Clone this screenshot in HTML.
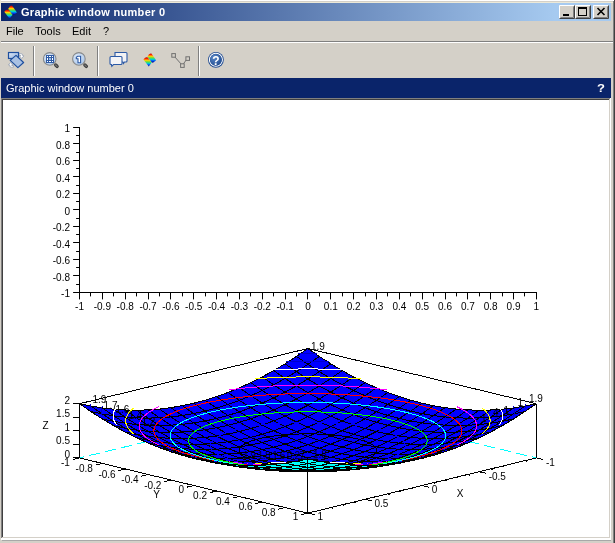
<!DOCTYPE html>
<html><head><meta charset="utf-8"><style>
html,body{margin:0;padding:0;}
svg,div{will-change:transform;}
body{width:615px;height:543px;position:relative;overflow:hidden;background:#d4d0c8;font-family:"Liberation Sans",sans-serif;}
.a{position:absolute;}
</style></head><body>
<div class="a" style="left:0;top:0;width:615px;height:1px;background:#fff"></div>
<div class="a" style="left:0;top:2px;width:613px;height:1px;background:#ece9d8"></div>
<div class="a" style="left:0;top:0;width:1px;height:21px;background:#ece9d8"></div>
<div class="a" style="left:613px;top:1px;width:1px;height:542px;background:#808080"></div>
<div class="a" style="left:614px;top:0;width:1px;height:543px;background:#404040"></div>
<div class="a" style="left:1px;top:3px;width:610px;height:18px;background:linear-gradient(to right,#0a246a 0px,#a6caf0 554px)"></div>
<div class="a" style="left:21px;top:5px;font-size:11px;line-height:14px;font-weight:bold;color:#fff;letter-spacing:0.3px;white-space:nowrap">Graphic window number 0</div>
<div class="a" style="left:6px;top:26px;font-size:11px;line-height:10px;white-space:nowrap">File</div>
<div class="a" style="left:35px;top:26px;font-size:11px;line-height:10px;white-space:nowrap">Tools</div>
<div class="a" style="left:72px;top:26px;font-size:11px;line-height:10px;white-space:nowrap">Edit</div>
<div class="a" style="left:103px;top:26px;font-size:11px;line-height:10px;white-space:nowrap">?</div>
<div class="a" style="left:1px;top:41px;width:612px;height:1px;background:#808080"></div>
<div class="a" style="left:1px;top:42px;width:612px;height:1px;background:#fff"></div>
<div class="a" style="left:1px;top:78px;width:610px;height:20px;background:#0a246a"></div>
<div class="a" style="left:6px;top:82px;font-size:11px;line-height:12px;color:#fff;white-space:nowrap">Graphic window number 0</div>
<div class="a" style="left:597px;top:83px;font-size:10px;line-height:11px;font-weight:bold;color:#fff;transform:scaleX(1.3);transform-origin:0 0">?</div>
<div class="a" style="left:1px;top:98px;width:610px;height:441px;background:#fff"></div>
<div class="a" style="left:1px;top:98px;width:609px;height:440px;background:#808080"></div>
<div class="a" style="left:2px;top:99px;width:608px;height:439px;background:#d4d0c8"></div>
<div class="a" style="left:2px;top:99px;width:607px;height:438px;background:#404040"></div>
<div class="a" style="left:3px;top:100px;width:606px;height:437px;background:#fff"></div>
<div class="a" style="left:1px;top:539px;width:610px;height:1px;background:#fff"></div>
<div class="a" style="left:2px;top:540px;width:609px;height:1px;background:#a8a8a8"></div>
<svg width="615" height="543" viewBox="0 0 615 543" style="position:absolute;left:0;top:0" font-family="Liberation Sans, sans-serif"><path d="M79.5 127.5V292.5H536.5" fill="none" stroke="#000" stroke-width="1" stroke-linecap="round"/><path d="M73.5 127.5H79.5 M76.5 135.5H79.5 M73.5 143.5H79.5 M76.5 152.5H79.5 M73.5 160.5H79.5 M76.5 168.5H79.5 M73.5 176.5H79.5 M76.5 185.5H79.5 M73.5 193.5H79.5 M76.5 201.5H79.5 M73.5 209.5H79.5 M76.5 218.5H79.5 M73.5 226.5H79.5 M76.5 234.5H79.5 M73.5 242.5H79.5 M76.5 251.5H79.5 M73.5 259.5H79.5 M76.5 267.5H79.5 M73.5 275.5H79.5 M76.5 284.5H79.5 M73.5 292.5H79.5 M79.5 292.5V299 M90.5 292.5V296 M102.5 292.5V299 M113.5 292.5V296 M125.5 292.5V299 M136.5 292.5V296 M148.5 292.5V299 M159.5 292.5V296 M170.5 292.5V299 M182.5 292.5V296 M193.5 292.5V299 M205.5 292.5V296 M216.5 292.5V299 M227.5 292.5V296 M239.5 292.5V299 M250.5 292.5V296 M262.5 292.5V299 M273.5 292.5V296 M285.5 292.5V299 M296.5 292.5V296 M307.5 292.5V299 M319.5 292.5V296 M330.5 292.5V299 M342.5 292.5V296 M353.5 292.5V299 M365.5 292.5V296 M376.5 292.5V299 M387.5 292.5V296 M399.5 292.5V299 M410.5 292.5V296 M422.5 292.5V299 M433.5 292.5V296 M445.5 292.5V299 M456.5 292.5V296 M467.5 292.5V299 M479.5 292.5V296 M490.5 292.5V299 M502.5 292.5V296 M513.5 292.5V299 M524.5 292.5V296 M536.5 292.5V299" stroke="#000" stroke-width="1" stroke-linecap="round"/><g font-size="10" fill="#000"><text x="70" y="132.3" text-anchor="end">1</text><text x="70" y="148.8" text-anchor="end">0.8</text><text x="70" y="165.3" text-anchor="end">0.6</text><text x="70" y="181.8" text-anchor="end">0.4</text><text x="70" y="198.3" text-anchor="end">0.2</text><text x="70" y="214.8" text-anchor="end">0</text><text x="70" y="231.3" text-anchor="end">-0.2</text><text x="70" y="247.8" text-anchor="end">-0.4</text><text x="70" y="264.3" text-anchor="end">-0.6</text><text x="70" y="280.8" text-anchor="end">-0.8</text><text x="70" y="297.3" text-anchor="end">-1</text><text x="79.5" y="310" text-anchor="middle">-1</text><text x="102.34" y="310" text-anchor="middle">-0.9</text><text x="125.19" y="310" text-anchor="middle">-0.8</text><text x="148.03" y="310" text-anchor="middle">-0.7</text><text x="170.88" y="310" text-anchor="middle">-0.6</text><text x="193.72" y="310" text-anchor="middle">-0.5</text><text x="216.57" y="310" text-anchor="middle">-0.4</text><text x="239.41" y="310" text-anchor="middle">-0.3</text><text x="262.26" y="310" text-anchor="middle">-0.2</text><text x="285.11" y="310" text-anchor="middle">-0.1</text><text x="307.95" y="310" text-anchor="middle">0</text><text x="330.79" y="310" text-anchor="middle">0.1</text><text x="353.64" y="310" text-anchor="middle">0.2</text><text x="376.49" y="310" text-anchor="middle">0.3</text><text x="399.33" y="310" text-anchor="middle">0.4</text><text x="422.17" y="310" text-anchor="middle">0.5</text><text x="445.02" y="310" text-anchor="middle">0.6</text><text x="467.87" y="310" text-anchor="middle">0.7</text><text x="490.71" y="310" text-anchor="middle">0.8</text><text x="513.55" y="310" text-anchor="middle">0.9</text><text x="536.4" y="310" text-anchor="middle">1</text></g><path d="M79.5 403.7L307.9 348.5M307.9 348.5L536.3 403.7" fill="none" stroke="#000" stroke-width="1" shape-rendering="crispEdges"/><path d="M79.5 457.9L307.9 402.7M536.3 457.9L307.9 402.7" fill="none" stroke="#00ffff" stroke-width="1" stroke-dasharray="11.1 5.3" stroke-dashoffset="6.7" shape-rendering="crispEdges"/><g font-size="10" fill="#000"><text x="92.5" y="403">1.9</text><text x="103.6" y="408.5">1.7</text><text x="529" y="402.3">1.9</text><text x="517.5" y="406.3">1</text><text x="311" y="349.5">1.9</text></g><g fill="#0000ff" stroke="#000" stroke-width="1" shape-rendering="crispEdges"><path d="M307.9 348.5L296.48 356.41L307.9 364.32L319.32 356.41Z"/><path d="M319.32 356.41L307.9 364.32L319.32 371.68L330.74 363.78Z"/><path d="M296.48 356.41L285.06 363.78L296.48 371.68L307.9 364.32Z"/><path d="M307.9 364.32L296.48 371.68L307.9 379.05L319.32 371.68Z"/><path d="M330.74 363.78L319.32 371.68L330.74 378.51L342.16 370.6Z"/><path d="M285.06 363.78L273.64 370.6L285.06 378.51L296.48 371.68Z"/><path d="M319.32 371.68L307.9 379.05L319.32 385.88L330.74 378.51Z"/><path d="M296.48 371.68L285.06 378.51L296.48 385.88L307.9 379.05Z"/><path d="M342.16 370.6L330.74 378.51L342.16 384.79L353.58 376.88Z"/><path d="M273.64 370.6L262.22 376.88L273.64 384.79L285.06 378.51Z"/><path d="M307.9 379.05L296.48 385.88L307.9 392.7L319.32 385.88Z"/><path d="M330.74 378.51L319.32 385.88L330.74 392.16L342.16 384.79Z"/><path d="M285.06 378.51L273.64 384.79L285.06 392.16L296.48 385.88Z"/><path d="M353.58 376.88L342.16 384.79L353.58 390.53L365 382.62Z"/><path d="M262.22 376.88L250.8 382.62L262.22 390.53L273.64 384.79Z"/><path d="M319.32 385.88L307.9 392.7L319.32 398.99L330.74 392.16Z"/><path d="M296.48 385.88L285.06 392.16L296.48 398.99L307.9 392.7Z"/><path d="M342.16 384.79L330.74 392.16L342.16 397.9L353.58 390.53Z"/><path d="M273.64 384.79L262.22 390.53L273.64 397.9L285.06 392.16Z"/><path d="M365 382.62L353.58 390.53L365 395.73L376.42 387.82Z"/><path d="M250.8 382.62L239.38 387.82L250.8 395.73L262.22 390.53Z"/><path d="M307.9 392.7L296.48 398.99L307.9 405.27L319.32 398.99Z"/><path d="M330.74 392.16L319.32 398.99L330.74 404.73L342.16 397.9Z"/><path d="M285.06 392.16L273.64 397.9L285.06 404.73L296.48 398.99Z"/><path d="M353.58 390.53L342.16 397.9L353.58 403.1L365 395.73Z"/><path d="M262.22 390.53L250.8 395.73L262.22 403.1L273.64 397.9Z"/><path d="M376.42 387.82L365 395.73L376.42 400.39L387.84 392.48Z"/><path d="M239.38 387.82L227.96 392.48L239.38 400.39L250.8 395.73Z"/><path d="M319.32 398.99L307.9 405.27L319.32 411.01L330.74 404.73Z"/><path d="M296.48 398.99L285.06 404.73L296.48 411.01L307.9 405.27Z"/><path d="M342.16 397.9L330.74 404.73L342.16 409.92L353.58 403.1Z"/><path d="M273.64 397.9L262.22 403.1L273.64 409.92L285.06 404.73Z"/><path d="M365 395.73L353.58 403.1L365 407.76L376.42 400.39Z"/><path d="M250.8 395.73L239.38 400.39L250.8 407.76L262.22 403.1Z"/><path d="M387.84 392.48L376.42 400.39L387.84 404.5L399.26 396.6Z"/><path d="M227.96 392.48L216.54 396.6L227.96 404.5L239.38 400.39Z"/><path d="M307.9 405.27L296.48 411.01L307.9 416.75L319.32 411.01Z"/><path d="M330.74 404.73L319.32 411.01L330.74 416.21L342.16 409.92Z"/><path d="M285.06 404.73L273.64 409.92L285.06 416.21L296.48 411.01Z"/><path d="M353.58 403.1L342.16 409.92L353.58 414.58L365 407.76Z"/><path d="M262.22 403.1L250.8 407.76L262.22 414.58L273.64 409.92Z"/><path d="M376.42 400.39L365 407.76L376.42 411.87L387.84 404.5Z"/><path d="M239.38 400.39L227.96 404.5L239.38 411.87L250.8 407.76Z"/><path d="M399.26 396.6L387.84 404.5L399.26 408.08L410.68 400.17Z"/><path d="M216.54 396.6L205.12 400.17L216.54 408.08L227.96 404.5Z"/><path d="M319.32 411.01L307.9 416.75L319.32 421.95L330.74 416.21Z"/><path d="M296.48 411.01L285.06 416.21L296.48 421.95L307.9 416.75Z"/><path d="M342.16 409.92L330.74 416.21L342.16 420.87L353.58 414.58Z"/><path d="M273.64 409.92L262.22 414.58L273.64 420.87L285.06 416.21Z"/><path d="M365 407.76L353.58 414.58L365 418.7L376.42 411.87Z"/><path d="M250.8 407.76L239.38 411.87L250.8 418.7L262.22 414.58Z"/><path d="M387.84 404.5L376.42 411.87L387.84 415.44L399.26 408.08Z"/><path d="M227.96 404.5L216.54 408.08L227.96 415.44L239.38 411.87Z"/><path d="M410.68 400.17L399.26 408.08L410.68 411.11L422.1 403.2Z"/><path d="M205.12 400.17L193.7 403.2L205.12 411.11L216.54 408.08Z"/><path d="M307.9 416.75L296.48 421.95L307.9 427.15L319.32 421.95Z"/><path d="M330.74 416.21L319.32 421.95L330.74 426.61L342.16 420.87Z"/><path d="M285.06 416.21L273.64 420.87L285.06 426.61L296.48 421.95Z"/><path d="M353.58 414.58L342.16 420.87L353.58 424.98L365 418.7Z"/><path d="M262.22 414.58L250.8 418.7L262.22 424.98L273.64 420.87Z"/><path d="M376.42 411.87L365 418.7L376.42 422.27L387.84 415.44Z"/><path d="M239.38 411.87L227.96 415.44L239.38 422.27L250.8 418.7Z"/><path d="M399.26 408.08L387.84 415.44L399.26 418.48L410.68 411.11Z"/><path d="M216.54 408.08L205.12 411.11L216.54 418.48L227.96 415.44Z"/><path d="M422.1 403.2L410.68 411.11L422.1 413.6L433.52 405.69Z"/><path d="M193.7 403.2L182.28 405.69L193.7 413.6L205.12 411.11Z"/><path d="M319.32 421.95L307.9 427.15L319.32 431.81L330.74 426.61Z"/><path d="M296.48 421.95L285.06 426.61L296.48 431.81L307.9 427.15Z"/><path d="M342.16 420.87L330.74 426.61L342.16 430.72L353.58 424.98Z"/><path d="M273.64 420.87L262.22 424.98L273.64 430.72L285.06 426.61Z"/><path d="M365 418.7L353.58 424.98L365 428.55L376.42 422.27Z"/><path d="M250.8 418.7L239.38 422.27L250.8 428.55L262.22 424.98Z"/><path d="M387.84 415.44L376.42 422.27L387.84 425.3L399.26 418.48Z"/><path d="M227.96 415.44L216.54 418.48L227.96 425.3L239.38 422.27Z"/><path d="M410.68 411.11L399.26 418.48L410.68 420.96L422.1 413.6Z"/><path d="M205.12 411.11L193.7 413.6L205.12 420.96L216.54 418.48Z"/><path d="M433.52 405.69L422.1 413.6L433.52 415.54L444.94 407.64Z"/><path d="M182.28 405.69L170.86 407.64L182.28 415.54L193.7 413.6Z"/><path d="M307.9 427.15L296.48 431.81L307.9 436.46L319.32 431.81Z"/><path d="M330.74 426.61L319.32 431.81L330.74 435.92L342.16 430.72Z"/><path d="M285.06 426.61L273.64 430.72L285.06 435.92L296.48 431.81Z"/><path d="M353.58 424.98L342.16 430.72L353.58 434.29L365 428.55Z"/><path d="M262.22 424.98L250.8 428.55L262.22 434.29L273.64 430.72Z"/><path d="M376.42 422.27L365 428.55L376.42 431.58L387.84 425.3Z"/><path d="M239.38 422.27L227.96 425.3L239.38 431.58L250.8 428.55Z"/><path d="M399.26 418.48L387.84 425.3L399.26 427.79L410.68 420.96Z"/><path d="M216.54 418.48L205.12 420.96L216.54 427.79L227.96 425.3Z"/><path d="M422.1 413.6L410.68 420.96L422.1 422.91L433.52 415.54Z"/><path d="M193.7 413.6L182.28 415.54L193.7 422.91L205.12 420.96Z"/><path d="M444.94 407.64L433.52 415.54L444.94 416.95L456.36 409.04Z"/><path d="M170.86 407.64L159.44 409.04L170.86 416.95L182.28 415.54Z"/><path d="M319.32 431.81L307.9 436.46L319.32 440.58L330.74 435.92Z"/><path d="M296.48 431.81L285.06 435.92L296.48 440.58L307.9 436.46Z"/><path d="M342.16 430.72L330.74 435.92L342.16 439.49L353.58 434.29Z"/><path d="M273.64 430.72L262.22 434.29L273.64 439.49L285.06 435.92Z"/><path d="M365 428.55L353.58 434.29L365 437.32L376.42 431.58Z"/><path d="M250.8 428.55L239.38 431.58L250.8 437.32L262.22 434.29Z"/><path d="M387.84 425.3L376.42 431.58L387.84 434.07L399.26 427.79Z"/><path d="M227.96 425.3L216.54 427.79L227.96 434.07L239.38 431.58Z"/><path d="M410.68 420.96L399.26 427.79L410.68 429.74L422.1 422.91Z"/><path d="M205.12 420.96L193.7 422.91L205.12 429.74L216.54 427.79Z"/><path d="M433.52 415.54L422.1 422.91L433.52 424.32L444.94 416.95Z"/><path d="M182.28 415.54L170.86 416.95L182.28 424.32L193.7 422.91Z"/><path d="M456.36 409.04L444.94 416.95L456.36 417.81L467.78 409.9Z"/><path d="M159.44 409.04L148.02 409.9L159.44 417.81L170.86 416.95Z"/><path d="M307.9 436.46L296.48 440.58L307.9 444.69L319.32 440.58Z"/><path d="M330.74 435.92L319.32 440.58L330.74 444.15L342.16 439.49Z"/><path d="M285.06 435.92L273.64 439.49L285.06 444.15L296.48 440.58Z"/><path d="M353.58 434.29L342.16 439.49L353.58 442.52L365 437.32Z"/><path d="M262.22 434.29L250.8 437.32L262.22 442.52L273.64 439.49Z"/><path d="M376.42 431.58L365 437.32L376.42 439.81L387.84 434.07Z"/><path d="M239.38 431.58L227.96 434.07L239.38 439.81L250.8 437.32Z"/><path d="M399.26 427.79L387.84 434.07L399.26 436.02L410.68 429.74Z"/><path d="M216.54 427.79L205.12 429.74L216.54 436.02L227.96 434.07Z"/><path d="M422.1 422.91L410.68 429.74L422.1 431.14L433.52 424.32Z"/><path d="M193.7 422.91L182.28 424.32L193.7 431.14L205.12 429.74Z"/><path d="M444.94 416.95L433.52 424.32L444.94 425.18L456.36 417.81Z"/><path d="M170.86 416.95L159.44 417.81L170.86 425.18L182.28 424.32Z"/><path d="M467.78 409.9L456.36 417.81L467.78 418.13L479.2 410.22Z"/><path d="M148.02 409.9L136.6 410.22L148.02 418.13L159.44 417.81Z"/><path d="M319.32 440.58L307.9 444.69L319.32 448.26L330.74 444.15Z"/><path d="M296.48 440.58L285.06 444.15L296.48 448.26L307.9 444.69Z"/><path d="M342.16 439.49L330.74 444.15L342.16 447.18L353.58 442.52Z"/><path d="M273.64 439.49L262.22 442.52L273.64 447.18L285.06 444.15Z"/><path d="M365 437.32L353.58 442.52L365 445.01L376.42 439.81Z"/><path d="M250.8 437.32L239.38 439.81L250.8 445.01L262.22 442.52Z"/><path d="M387.84 434.07L376.42 439.81L387.84 441.76L399.26 436.02Z"/><path d="M227.96 434.07L216.54 436.02L227.96 441.76L239.38 439.81Z"/><path d="M410.68 429.74L399.26 436.02L410.68 437.43L422.1 431.14Z"/><path d="M205.12 429.74L193.7 431.14L205.12 437.43L216.54 436.02Z"/><path d="M433.52 424.32L422.1 431.14L433.52 432L444.94 425.18Z"/><path d="M182.28 424.32L170.86 425.18L182.28 432L193.7 431.14Z"/><path d="M456.36 417.81L444.94 425.18L456.36 425.5L467.78 418.13Z"/><path d="M159.44 417.81L148.02 418.13L159.44 425.5L170.86 425.18Z"/><path d="M479.2 410.22L467.78 418.13L479.2 417.91L490.62 410Z"/><path d="M136.6 410.22L125.18 410L136.6 417.91L148.02 418.13Z"/><path d="M307.9 444.69L296.48 448.26L307.9 451.84L319.32 448.26Z"/><path d="M330.74 444.15L319.32 448.26L330.74 451.3L342.16 447.18Z"/><path d="M285.06 444.15L273.64 447.18L285.06 451.3L296.48 448.26Z"/><path d="M353.58 442.52L342.16 447.18L353.58 449.67L365 445.01Z"/><path d="M262.22 442.52L250.8 445.01L262.22 449.67L273.64 447.18Z"/><path d="M376.42 439.81L365 445.01L376.42 446.96L387.84 441.76Z"/><path d="M239.38 439.81L227.96 441.76L239.38 446.96L250.8 445.01Z"/><path d="M399.26 436.02L387.84 441.76L399.26 443.17L410.68 437.43Z"/><path d="M216.54 436.02L205.12 437.43L216.54 443.17L227.96 441.76Z"/><path d="M422.1 431.14L410.68 437.43L422.1 438.29L433.52 432Z"/><path d="M193.7 431.14L182.28 432L193.7 438.29L205.12 437.43Z"/><path d="M444.94 425.18L433.52 432L444.94 432.33L456.36 425.5Z"/><path d="M170.86 425.18L159.44 425.5L170.86 432.33L182.28 432Z"/><path d="M467.78 418.13L456.36 425.5L467.78 425.28L479.2 417.91Z"/><path d="M148.02 418.13L136.6 417.91L148.02 425.28L159.44 425.5Z"/><path d="M490.62 410L479.2 417.91L490.62 417.15L502.04 409.24Z"/><path d="M125.18 410L113.76 409.24L125.18 417.15L136.6 417.91Z"/><path d="M319.32 448.26L307.9 451.84L319.32 454.87L330.74 451.3Z"/><path d="M296.48 448.26L285.06 451.3L296.48 454.87L307.9 451.84Z"/><path d="M342.16 447.18L330.74 451.3L342.16 453.78L353.58 449.67Z"/><path d="M273.64 447.18L262.22 449.67L273.64 453.78L285.06 451.3Z"/><path d="M365 445.01L353.58 449.67L365 451.62L376.42 446.96Z"/><path d="M250.8 445.01L239.38 446.96L250.8 451.62L262.22 449.67Z"/><path d="M387.84 441.76L376.42 446.96L387.84 448.37L399.26 443.17Z"/><path d="M227.96 441.76L216.54 443.17L227.96 448.37L239.38 446.96Z"/><path d="M410.68 437.43L399.26 443.17L410.68 444.03L422.1 438.29Z"/><path d="M205.12 437.43L193.7 438.29L205.12 444.03L216.54 443.17Z"/><path d="M433.52 432L422.1 438.29L433.52 438.61L444.94 432.33Z"/><path d="M182.28 432L170.86 432.33L182.28 438.61L193.7 438.29Z"/><path d="M456.36 425.5L444.94 432.33L456.36 432.1L467.78 425.28Z"/><path d="M159.44 425.5L148.02 425.28L159.44 432.1L170.86 432.33Z"/><path d="M479.2 417.91L467.78 425.28L479.2 424.52L490.62 417.15Z"/><path d="M136.6 417.91L125.18 417.15L136.6 424.52L148.02 425.28Z"/><path d="M502.04 409.24L490.62 417.15L502.04 415.84L513.46 407.94Z"/><path d="M113.76 409.24L102.34 407.94L113.76 415.84L125.18 417.15Z"/><path d="M307.9 451.84L296.48 454.87L307.9 457.9L319.32 454.87Z"/><path d="M330.74 451.3L319.32 454.87L330.74 457.36L342.16 453.78Z"/><path d="M285.06 451.3L273.64 453.78L285.06 457.36L296.48 454.87Z"/><path d="M353.58 449.67L342.16 453.78L353.58 455.73L365 451.62Z"/><path d="M262.22 449.67L250.8 451.62L262.22 455.73L273.64 453.78Z"/><path d="M376.42 446.96L365 451.62L376.42 453.02L387.84 448.37Z"/><path d="M239.38 446.96L227.96 448.37L239.38 453.02L250.8 451.62Z"/><path d="M399.26 443.17L387.84 448.37L399.26 449.23L410.68 444.03Z"/><path d="M216.54 443.17L205.12 444.03L216.54 449.23L227.96 448.37Z"/><path d="M422.1 438.29L410.68 444.03L422.1 444.35L433.52 438.61Z"/><path d="M193.7 438.29L182.28 438.61L193.7 444.35L205.12 444.03Z"/><path d="M444.94 432.33L433.52 438.61L444.94 438.39L456.36 432.1Z"/><path d="M170.86 432.33L159.44 432.1L170.86 438.39L182.28 438.61Z"/><path d="M467.78 425.28L456.36 432.1L467.78 431.34L479.2 424.52Z"/><path d="M148.02 425.28L136.6 424.52L148.02 431.34L159.44 432.1Z"/><path d="M490.62 417.15L479.2 424.52L490.62 423.21L502.04 415.84Z"/><path d="M125.18 417.15L113.76 415.84L125.18 423.21L136.6 424.52Z"/><path d="M513.46 407.94L502.04 415.84L513.46 414L524.88 406.09Z"/><path d="M102.34 407.94L90.92 406.09L102.34 414L113.76 415.84Z"/><path d="M319.32 454.87L307.9 457.9L319.32 460.39L330.74 457.36Z"/><path d="M296.48 454.87L285.06 457.36L296.48 460.39L307.9 457.9Z"/><path d="M342.16 453.78L330.74 457.36L342.16 459.3L353.58 455.73Z"/><path d="M273.64 453.78L262.22 455.73L273.64 459.3L285.06 457.36Z"/><path d="M365 451.62L353.58 455.73L365 457.14L376.42 453.02Z"/><path d="M250.8 451.62L239.38 453.02L250.8 457.14L262.22 455.73Z"/><path d="M387.84 448.37L376.42 453.02L387.84 453.88L399.26 449.23Z"/><path d="M227.96 448.37L216.54 449.23L227.96 453.88L239.38 453.02Z"/><path d="M410.68 444.03L399.26 449.23L410.68 449.55L422.1 444.35Z"/><path d="M205.12 444.03L193.7 444.35L205.12 449.55L216.54 449.23Z"/><path d="M433.52 438.61L422.1 444.35L433.52 444.13L444.94 438.39Z"/><path d="M182.28 438.61L170.86 438.39L182.28 444.13L193.7 444.35Z"/><path d="M456.36 432.1L444.94 438.39L456.36 437.62L467.78 431.34Z"/><path d="M159.44 432.1L148.02 431.34L159.44 437.62L170.86 438.39Z"/><path d="M479.2 424.52L467.78 431.34L479.2 430.04L490.62 423.21Z"/><path d="M136.6 424.52L125.18 423.21L136.6 430.04L148.02 431.34Z"/><path d="M502.04 415.84L490.62 423.21L502.04 421.36L513.46 414Z"/><path d="M113.76 415.84L102.34 414L113.76 421.36L125.18 423.21Z"/><path d="M307.9 457.9L296.48 460.39L307.9 462.88L319.32 460.39Z"/><path d="M330.74 457.36L319.32 460.39L330.74 462.34L342.16 459.3Z"/><path d="M285.06 457.36L273.64 459.3L285.06 462.34L296.48 460.39Z"/><path d="M353.58 455.73L342.16 459.3L353.58 460.71L365 457.14Z"/><path d="M262.22 455.73L250.8 457.14L262.22 460.71L273.64 459.3Z"/><path d="M524.88 406.09L513.46 414L524.88 411.61L536.3 403.7Z"/><path d="M90.92 406.09L79.5 403.7L90.92 411.61L102.34 414Z"/><path d="M376.42 453.02L365 457.14L376.42 458L387.84 453.88Z"/><path d="M239.38 453.02L227.96 453.88L239.38 458L250.8 457.14Z"/><path d="M399.26 449.23L387.84 453.88L399.26 454.21L410.68 449.55Z"/><path d="M216.54 449.23L205.12 449.55L216.54 454.21L227.96 453.88Z"/><path d="M422.1 444.35L410.68 449.55L422.1 449.33L433.52 444.13Z"/><path d="M193.7 444.35L182.28 444.13L193.7 449.33L205.12 449.55Z"/><path d="M444.94 438.39L433.52 444.13L444.94 443.37L456.36 437.62Z"/><path d="M170.86 438.39L159.44 437.62L170.86 443.37L182.28 444.13Z"/><path d="M467.78 431.34L456.36 437.62L467.78 436.32L479.2 430.04Z"/><path d="M148.02 431.34L136.6 430.04L148.02 436.32L159.44 437.62Z"/><path d="M490.62 423.21L479.2 430.04L490.62 428.19L502.04 421.36Z"/><path d="M125.18 423.21L113.76 421.36L125.18 428.19L136.6 430.04Z"/><path d="M513.46 414L502.04 421.36L513.46 418.98L524.88 411.61Z"/><path d="M102.34 414L90.92 411.61L102.34 418.98L113.76 421.36Z"/><path d="M319.32 460.39L307.9 462.88L319.32 464.82L330.74 462.34Z"/><path d="M296.48 460.39L285.06 462.34L296.48 464.82L307.9 462.88Z"/><path d="M342.16 459.3L330.74 462.34L342.16 463.74L353.58 460.71Z"/><path d="M273.64 459.3L262.22 460.71L273.64 463.74L285.06 462.34Z"/><path d="M365 457.14L353.58 460.71L365 461.57L376.42 458Z"/><path d="M250.8 457.14L239.38 458L250.8 461.57L262.22 460.71Z"/><path d="M387.84 453.88L376.42 458L387.84 458.32L399.26 454.21Z"/><path d="M227.96 453.88L216.54 454.21L227.96 458.32L239.38 458Z"/><path d="M410.68 449.55L399.26 454.21L410.68 453.99L422.1 449.33Z"/><path d="M205.12 449.55L193.7 449.33L205.12 453.99L216.54 454.21Z"/><path d="M433.52 444.13L422.1 449.33L433.52 448.56L444.94 443.37Z"/><path d="M182.28 444.13L170.86 443.37L182.28 448.56L193.7 449.33Z"/><path d="M456.36 437.62L444.94 443.37L456.36 442.06L467.78 436.32Z"/><path d="M159.44 437.62L148.02 436.32L159.44 442.06L170.86 443.37Z"/><path d="M479.2 430.04L467.78 436.32L479.2 434.47L490.62 428.19Z"/><path d="M136.6 430.04L125.18 428.19L136.6 434.47L148.02 436.32Z"/><path d="M502.04 421.36L490.62 428.19L502.04 425.8L513.46 418.98Z"/><path d="M113.76 421.36L102.34 418.98L113.76 425.8L125.18 428.19Z"/><path d="M307.9 462.88L296.48 464.82L307.9 466.77L319.32 464.82Z"/><path d="M330.74 462.34L319.32 464.82L330.74 466.23L342.16 463.74Z"/><path d="M285.06 462.34L273.64 463.74L285.06 466.23L296.48 464.82Z"/><path d="M353.58 460.71L342.16 463.74L353.58 464.6L365 461.57Z"/><path d="M262.22 460.71L250.8 461.57L262.22 464.6L273.64 463.74Z"/><path d="M376.42 458L365 461.57L376.42 461.89L387.84 458.32Z"/><path d="M239.38 458L227.96 458.32L239.38 461.89L250.8 461.57Z"/><path d="M399.26 454.21L387.84 458.32L399.26 458.1L410.68 453.99Z"/><path d="M216.54 454.21L205.12 453.99L216.54 458.1L227.96 458.32Z"/><path d="M422.1 449.33L410.68 453.99L422.1 453.22L433.52 448.56Z"/><path d="M193.7 449.33L182.28 448.56L193.7 453.22L205.12 453.99Z"/><path d="M444.94 443.37L433.52 448.56L444.94 447.26L456.36 442.06Z"/><path d="M170.86 443.37L159.44 442.06L170.86 447.26L182.28 448.56Z"/><path d="M467.78 436.32L456.36 442.06L467.78 440.21L479.2 434.47Z"/><path d="M148.02 436.32L136.6 434.47L148.02 440.21L159.44 442.06Z"/><path d="M490.62 428.19L479.2 434.47L490.62 432.08L502.04 425.8Z"/><path d="M125.18 428.19L113.76 425.8L125.18 432.08L136.6 434.47Z"/><path d="M319.32 464.82L307.9 466.77L319.32 468.18L330.74 466.23Z"/><path d="M296.48 464.82L285.06 466.23L296.48 468.18L307.9 466.77Z"/><path d="M342.16 463.74L330.74 466.23L342.16 467.09L353.58 464.6Z"/><path d="M273.64 463.74L262.22 464.6L273.64 467.09L285.06 466.23Z"/><path d="M365 461.57L353.58 464.6L365 464.93L376.42 461.89Z"/><path d="M250.8 461.57L239.38 461.89L250.8 464.93L262.22 464.6Z"/><path d="M387.84 458.32L376.42 461.89L387.84 461.67L399.26 458.1Z"/><path d="M227.96 458.32L216.54 458.1L227.96 461.67L239.38 461.89Z"/><path d="M410.68 453.99L399.26 458.1L410.68 457.34L422.1 453.22Z"/><path d="M205.12 453.99L193.7 453.22L205.12 457.34L216.54 458.1Z"/><path d="M433.52 448.56L422.1 453.22L433.52 451.92L444.94 447.26Z"/><path d="M182.28 448.56L170.86 447.26L182.28 451.92L193.7 453.22Z"/><path d="M456.36 442.06L444.94 447.26L456.36 445.41L467.78 440.21Z"/><path d="M159.44 442.06L148.02 440.21L159.44 445.41L170.86 447.26Z"/><path d="M479.2 434.47L467.78 440.21L479.2 437.82L490.62 432.08Z"/><path d="M136.6 434.47L125.18 432.08L136.6 437.82L148.02 440.21Z"/><path d="M307.9 466.77L296.48 468.18L307.9 469.58L319.32 468.18Z"/><path d="M330.74 466.23L319.32 468.18L330.74 469.04L342.16 467.09Z"/><path d="M285.06 466.23L273.64 467.09L285.06 469.04L296.48 468.18Z"/><path d="M353.58 464.6L342.16 467.09L353.58 467.41L365 464.93Z"/><path d="M262.22 464.6L250.8 464.93L262.22 467.41L273.64 467.09Z"/><path d="M376.42 461.89L365 464.93L376.42 464.7L387.84 461.67Z"/><path d="M239.38 461.89L227.96 461.67L239.38 464.7L250.8 464.93Z"/><path d="M399.26 458.1L387.84 461.67L399.26 460.91L410.68 457.34Z"/><path d="M216.54 458.1L205.12 457.34L216.54 460.91L227.96 461.67Z"/><path d="M422.1 453.22L410.68 457.34L422.1 456.03L433.52 451.92Z"/><path d="M193.7 453.22L182.28 451.92L193.7 456.03L205.12 457.34Z"/><path d="M444.94 447.26L433.52 451.92L444.94 450.07L456.36 445.41Z"/><path d="M170.86 447.26L159.44 445.41L170.86 450.07L182.28 451.92Z"/><path d="M467.78 440.21L456.36 445.41L467.78 443.02L479.2 437.82Z"/><path d="M148.02 440.21L136.6 437.82L148.02 443.02L159.44 445.41Z"/><path d="M319.32 468.18L307.9 469.58L319.32 470.44L330.74 469.04Z"/><path d="M296.48 468.18L285.06 469.04L296.48 470.44L307.9 469.58Z"/><path d="M342.16 467.09L330.74 469.04L342.16 469.36L353.58 467.41Z"/><path d="M273.64 467.09L262.22 467.41L273.64 469.36L285.06 469.04Z"/><path d="M365 464.93L353.58 467.41L365 467.19L376.42 464.7Z"/><path d="M250.8 464.93L239.38 464.7L250.8 467.19L262.22 467.41Z"/><path d="M387.84 461.67L376.42 464.7L387.84 463.94L399.26 460.91Z"/><path d="M227.96 461.67L216.54 460.91L227.96 463.94L239.38 464.7Z"/><path d="M410.68 457.34L399.26 460.91L410.68 459.6L422.1 456.03Z"/><path d="M205.12 457.34L193.7 456.03L205.12 459.6L216.54 460.91Z"/><path d="M433.52 451.92L422.1 456.03L433.52 454.18L444.94 450.07Z"/><path d="M182.28 451.92L170.86 450.07L182.28 454.18L193.7 456.03Z"/><path d="M456.36 445.41L444.94 450.07L456.36 447.68L467.78 443.02Z"/><path d="M159.44 445.41L148.02 443.02L159.44 447.68L170.86 450.07Z"/><path d="M307.9 469.58L296.48 470.44L307.9 471.31L319.32 470.44Z"/><path d="M330.74 469.04L319.32 470.44L330.74 470.77L342.16 469.36Z"/><path d="M285.06 469.04L273.64 469.36L285.06 470.77L296.48 470.44Z"/><path d="M353.58 467.41L342.16 469.36L353.58 469.14L365 467.19Z"/><path d="M262.22 467.41L250.8 467.19L262.22 469.14L273.64 469.36Z"/><path d="M376.42 464.7L365 467.19L376.42 466.43L387.84 463.94Z"/><path d="M239.38 464.7L227.96 463.94L239.38 466.43L250.8 467.19Z"/><path d="M399.26 460.91L387.84 463.94L399.26 462.64L410.68 459.6Z"/><path d="M216.54 460.91L205.12 459.6L216.54 462.64L227.96 463.94Z"/><path d="M422.1 456.03L410.68 459.6L422.1 457.76L433.52 454.18Z"/><path d="M193.7 456.03L182.28 454.18L193.7 457.76L205.12 459.6Z"/><path d="M444.94 450.07L433.52 454.18L444.94 451.8L456.36 447.68Z"/><path d="M170.86 450.07L159.44 447.68L170.86 451.8L182.28 454.18Z"/><path d="M319.32 470.44L307.9 471.31L319.32 471.63L330.74 470.77Z"/><path d="M296.48 470.44L285.06 470.77L296.48 471.63L307.9 471.31Z"/><path d="M342.16 469.36L330.74 470.77L342.16 470.55L353.58 469.14Z"/><path d="M273.64 469.36L262.22 469.14L273.64 470.55L285.06 470.77Z"/><path d="M365 467.19L353.58 469.14L365 468.38L376.42 466.43Z"/><path d="M250.8 467.19L239.38 466.43L250.8 468.38L262.22 469.14Z"/><path d="M387.84 463.94L376.42 466.43L387.84 465.12L399.26 462.64Z"/><path d="M227.96 463.94L216.54 462.64L227.96 465.12L239.38 466.43Z"/><path d="M410.68 459.6L399.26 462.64L410.68 460.79L422.1 457.76Z"/><path d="M205.12 459.6L193.7 457.76L205.12 460.79L216.54 462.64Z"/><path d="M433.52 454.18L422.1 457.76L433.52 455.37L444.94 451.8Z"/><path d="M182.28 454.18L170.86 451.8L182.28 455.37L193.7 457.76Z"/><path d="M307.9 471.31L296.48 471.63L307.9 471.95L319.32 471.63Z"/><path d="M330.74 470.77L319.32 471.63L330.74 471.41L342.16 470.55Z"/><path d="M285.06 470.77L273.64 470.55L285.06 471.41L296.48 471.63Z"/><path d="M353.58 469.14L342.16 470.55L353.58 469.78L365 468.38Z"/><path d="M262.22 469.14L250.8 468.38L262.22 469.78L273.64 470.55Z"/><path d="M376.42 466.43L365 468.38L376.42 467.07L387.84 465.12Z"/><path d="M239.38 466.43L227.96 465.12L239.38 467.07L250.8 468.38Z"/><path d="M399.26 462.64L387.84 465.12L399.26 463.28L410.68 460.79Z"/><path d="M216.54 462.64L205.12 460.79L216.54 463.28L227.96 465.12Z"/><path d="M422.1 457.76L410.68 460.79L422.1 458.4L433.52 455.37Z"/><path d="M193.7 457.76L182.28 455.37L193.7 458.4L205.12 460.79Z"/><path d="M319.32 471.63L307.9 471.95L319.32 471.73L330.74 471.41Z"/><path d="M296.48 471.63L285.06 471.41L296.48 471.73L307.9 471.95Z"/><path d="M342.16 470.55L330.74 471.41L342.16 470.64L353.58 469.78Z"/><path d="M273.64 470.55L262.22 469.78L273.64 470.64L285.06 471.41Z"/><path d="M365 468.38L353.58 469.78L365 468.48L376.42 467.07Z"/><path d="M250.8 468.38L239.38 467.07L250.8 468.48L262.22 469.78Z"/><path d="M387.84 465.12L376.42 467.07L387.84 465.22L399.26 463.28Z"/><path d="M227.96 465.12L216.54 463.28L227.96 465.22L239.38 467.07Z"/><path d="M410.68 460.79L399.26 463.28L410.68 460.89L422.1 458.4Z"/><path d="M205.12 460.79L193.7 458.4L205.12 460.89L216.54 463.28Z"/></g><path d="M298.4 458.74L300.3 458.76L302.2 458.78L304.1 458.79L306 458.79L307.9 458.79L309.8 458.79L311.7 458.79L313.6 458.78L315.5 458.76L317.4 458.74M525.46 408.46L525.54 408L525.6 407.54L525.64 407.08L525.66 406.62L525.67 406.16L525.66 405.7L525.64 405.25L525.6 404.79L525.54 404.33L525.46 403.87M317.4 353.58L315.5 353.56L313.6 353.55L311.7 353.54L309.8 353.53L307.9 353.53L306 353.53L304.1 353.54L302.2 353.55L300.3 353.56L298.4 353.58M90.34 403.87L90.26 404.33L90.2 404.79L90.16 405.25L90.14 405.7L90.13 406.16L90.14 406.62L90.16 407.08L90.2 407.54L90.26 408L90.34 408.46" fill="none" stroke="#0000c8" stroke-width="1" shape-rendering="crispEdges"/><path d="M286.3 460.75L288.1 460.79L289.89 460.83L291.69 460.87L293.49 460.9L295.29 460.93L297.09 460.95L298.89 460.97L300.69 460.99L302.49 461L304.29 461.01L306.1 461.02L307.9 461.02L309.7 461.02L311.51 461.01L313.31 461L315.11 460.99L316.91 460.97L318.71 460.95L320.51 460.93L322.31 460.9L324.11 460.87L325.91 460.83L327.7 460.79L329.5 460.75M513.36 416.31L513.54 415.88L513.71 415.44L513.86 415.01L513.99 414.57L514.11 414.14L514.21 413.7L514.3 413.27L514.37 412.83L514.42 412.4L514.46 411.96L514.49 411.53L514.5 411.09L514.49 410.66L514.46 410.22L514.42 409.78L514.37 409.35L514.3 408.91L514.21 408.48L514.11 408.04L513.99 407.61L513.86 407.17L513.71 406.74L513.54 406.31L513.36 405.87M329.5 361.43L327.7 361.39L325.91 361.35L324.11 361.31L322.31 361.28L320.51 361.25L318.71 361.23L316.91 361.21L315.11 361.19L313.31 361.18L311.51 361.17L309.7 361.16L307.9 361.16L306.1 361.16L304.29 361.17L302.49 361.18L300.69 361.19L298.89 361.21L297.09 361.23L295.29 361.25L293.49 361.28L291.69 361.31L289.89 361.35L288.1 361.39L286.3 361.43M102.44 405.87L102.26 406.31L102.09 406.74L101.94 407.17L101.81 407.61L101.69 408.04L101.59 408.48L101.5 408.91L101.43 409.35L101.38 409.78L101.34 410.22L101.31 410.66L101.3 411.09L101.31 411.53L101.34 411.96L101.38 412.4L101.43 412.83L101.5 413.27L101.59 413.7L101.69 414.14L101.81 414.57L101.94 415.01L102.09 415.44L102.26 415.88L102.44 416.31" fill="none" stroke="#0000d0" stroke-width="1" shape-rendering="crispEdges"/><path d="M270.73 462.23L272.4 462.3L274.08 462.38L275.75 462.45L277.43 462.51L279.11 462.58L280.79 462.63L282.48 462.69L284.16 462.74L285.85 462.79L287.54 462.84L289.23 462.88L290.92 462.91L292.62 462.95L294.31 462.98L296.01 463.01L297.71 463.03L299.4 463.05L301.1 463.06L302.8 463.08L304.5 463.09L306.2 463.09L307.9 463.09L309.6 463.09L311.3 463.09L313 463.08L314.7 463.06L316.4 463.05L318.09 463.03L319.79 463.01L321.49 462.98L323.18 462.95L324.88 462.91L326.57 462.88L328.26 462.84L329.95 462.79L331.64 462.74L333.32 462.69L335.01 462.63L336.69 462.58L338.37 462.51L340.05 462.45L341.72 462.38L343.4 462.3L345.07 462.23M499.1 425L499.42 424.6L499.72 424.19L500.01 423.79L500.28 423.38L500.54 422.98L500.78 422.57L501.01 422.16L501.23 421.76L501.43 421.35L501.61 420.94L501.78 420.53L501.94 420.12L502.08 419.71L502.21 419.3L502.32 418.89L502.41 418.48L502.49 418.07L502.56 417.66L502.61 417.25L502.65 416.84L502.67 416.43L502.68 416.02L502.67 415.61L502.65 415.2L502.61 414.79L502.56 414.38L502.49 413.96L502.41 413.55L502.32 413.14L502.21 412.73L502.08 412.32L501.94 411.92L501.78 411.51L501.61 411.1L501.43 410.69L501.23 410.28L501.01 409.87L500.78 409.47L500.54 409.06L500.28 408.65L500.01 408.25L499.72 407.84L499.42 407.44L499.1 407.04M345.07 369.81L343.4 369.73L341.72 369.66L340.05 369.59L338.37 369.52L336.69 369.46L335.01 369.4L333.32 369.35L331.64 369.29L329.95 369.25L328.26 369.2L326.57 369.16L324.88 369.12L323.18 369.09L321.49 369.06L319.79 369.03L318.09 369.01L316.4 368.99L314.7 368.97L313 368.96L311.3 368.95L309.6 368.95L307.9 368.94L306.2 368.95L304.5 368.95L302.8 368.96L301.1 368.97L299.4 368.99L297.71 369.01L296.01 369.03L294.31 369.06L292.62 369.09L290.92 369.12L289.23 369.16L287.54 369.2L285.85 369.25L284.16 369.29L282.48 369.35L280.79 369.4L279.11 369.46L277.43 369.52L275.75 369.59L274.08 369.66L272.4 369.73L270.73 369.81M116.7 407.04L116.38 407.44L116.08 407.84L115.79 408.25L115.52 408.65L115.26 409.06L115.02 409.47L114.79 409.87L114.57 410.28L114.37 410.69L114.19 411.1L114.02 411.51L113.86 411.92L113.72 412.32L113.59 412.73L113.48 413.14L113.39 413.55L113.31 413.96L113.24 414.38L113.19 414.79L113.15 415.2L113.13 415.61L113.12 416.02L113.13 416.43L113.15 416.84L113.19 417.25L113.24 417.66L113.31 418.07L113.39 418.48L113.48 418.89L113.59 419.3L113.72 419.71L113.86 420.12L114.02 420.53L114.19 420.94L114.37 421.35L114.57 421.76L114.79 422.16L115.02 422.57L115.26 422.98L115.52 423.38L115.79 423.79L116.08 424.19L116.38 424.6L116.7 425" fill="none" stroke="#ffffff" stroke-width="1" shape-rendering="crispEdges"/><path d="M254.63 463.06L256.15 463.17L257.68 463.27L259.21 463.38L260.74 463.48L262.28 463.58L263.82 463.67L265.37 463.76L266.91 463.85L268.46 463.94L270.02 464.02L271.58 464.1L273.13 464.17L274.7 464.24L276.26 464.31L277.83 464.38L279.4 464.44L280.97 464.5L282.54 464.55L284.12 464.6L285.7 464.65L287.27 464.7L288.85 464.74L290.44 464.78L292.02 464.81L293.6 464.84L295.19 464.87L296.78 464.9L298.36 464.92L299.95 464.94L301.54 464.95L303.13 464.96L304.72 464.97L306.31 464.98L307.9 464.98L309.49 464.98L311.08 464.97L312.67 464.96L314.26 464.95L315.85 464.94L317.44 464.92L319.02 464.9L320.61 464.87L322.2 464.84L323.78 464.81L325.36 464.78L326.95 464.74L328.53 464.7L330.1 464.65L331.68 464.6L333.26 464.55L334.83 464.5L336.4 464.44L337.97 464.38L339.54 464.31L341.1 464.24L342.67 464.17L344.22 464.1L345.78 464.02L347.34 463.94L348.89 463.85L350.43 463.76L351.98 463.67L353.52 463.58L355.06 463.48L356.59 463.38L358.12 463.27L359.65 463.17L361.17 463.06M482.14 433.82L482.6 433.45L483.04 433.08L483.47 432.71L483.89 432.34L484.3 431.97L484.69 431.6L485.07 431.23L485.43 430.85L485.78 430.48L486.12 430.1L486.44 429.72L486.75 429.35L487.05 428.97L487.33 428.59L487.6 428.21L487.86 427.83L488.1 427.45L488.33 427.07L488.54 426.69L488.74 426.31L488.93 425.93L489.1 425.55L489.26 425.17L489.41 424.78L489.54 424.4L489.66 424.02L489.76 423.63L489.85 423.25L489.93 422.87L489.99 422.48L490.04 422.1L490.07 421.71L490.09 421.33L490.1 420.95L490.09 420.56L490.07 420.18L490.04 419.79L489.99 419.41L489.93 419.02L489.85 418.64L489.76 418.26L489.66 417.87L489.54 417.49L489.41 417.11L489.26 416.72L489.1 416.34L488.93 415.96L488.74 415.58L488.54 415.2L488.33 414.82L488.1 414.44L487.86 414.06L487.6 413.68L487.33 413.3L487.05 412.92L486.75 412.54L486.44 412.17L486.12 411.79L485.78 411.41L485.43 411.04L485.07 410.67L484.69 410.29L484.3 409.92L483.89 409.55L483.47 409.18L483.04 408.81L482.6 408.44L482.14 408.07M361.17 378.84L359.65 378.72L358.12 378.62L356.59 378.51L355.06 378.41L353.52 378.31L351.98 378.22L350.43 378.13L348.89 378.04L347.34 377.95L345.78 377.87L344.22 377.8L342.67 377.72L341.1 377.65L339.54 377.58L337.97 377.51L336.4 377.45L334.83 377.39L333.26 377.34L331.68 377.29L330.1 377.24L328.53 377.19L326.95 377.15L325.36 377.11L323.78 377.08L322.2 377.05L320.61 377.02L319.02 376.99L317.44 376.97L315.85 376.95L314.26 376.94L312.67 376.93L311.08 376.92L309.49 376.91L307.9 376.91L306.31 376.91L304.72 376.92L303.13 376.93L301.54 376.94L299.95 376.95L298.36 376.97L296.78 376.99L295.19 377.02L293.6 377.05L292.02 377.08L290.44 377.11L288.85 377.15L287.27 377.19L285.7 377.24L284.12 377.29L282.54 377.34L280.97 377.39L279.4 377.45L277.83 377.51L276.26 377.58L274.7 377.65L273.13 377.72L271.58 377.8L270.02 377.87L268.46 377.95L266.91 378.04L265.37 378.13L263.82 378.22L262.28 378.31L260.74 378.41L259.21 378.51L257.68 378.62L256.15 378.72L254.63 378.84M133.66 408.07L133.2 408.44L132.76 408.81L132.33 409.18L131.91 409.55L131.5 409.92L131.11 410.29L130.73 410.67L130.37 411.04L130.02 411.41L129.68 411.79L129.36 412.17L129.05 412.54L128.75 412.92L128.47 413.3L128.2 413.68L127.94 414.06L127.7 414.44L127.47 414.82L127.26 415.2L127.06 415.58L126.87 415.96L126.7 416.34L126.54 416.72L126.39 417.11L126.26 417.49L126.14 417.87L126.04 418.26L125.95 418.64L125.87 419.02L125.81 419.41L125.76 419.79L125.73 420.18L125.71 420.56L125.7 420.95L125.71 421.33L125.73 421.71L125.76 422.1L125.81 422.48L125.87 422.87L125.95 423.25L126.04 423.63L126.14 424.02L126.26 424.4L126.39 424.78L126.54 425.17L126.7 425.55L126.87 425.93L127.06 426.31L127.26 426.69L127.47 427.07L127.7 427.45L127.94 427.83L128.2 428.21L128.47 428.59L128.75 428.97L129.05 429.35L129.36 429.72L129.68 430.1L130.02 430.48L130.37 430.85L130.73 431.23L131.11 431.6L131.5 431.97L131.91 432.34L132.33 432.71L132.76 433.08L133.2 433.45L133.66 433.82" fill="none" stroke="#ffff00" stroke-width="1" shape-rendering="crispEdges"/><path d="M228.71 461.87L230.01 462.03L231.32 462.2L232.63 462.36L233.95 462.51L235.28 462.67L236.61 462.82L237.95 462.97L239.29 463.12L240.64 463.26L241.99 463.4L243.35 463.54L244.71 463.67L246.08 463.8L247.45 463.93L248.83 464.06L250.21 464.18L251.59 464.3L252.98 464.42L254.38 464.53L255.77 464.65L257.18 464.75L258.58 464.86L259.99 464.96L261.4 465.06L262.82 465.16L264.24 465.25L265.66 465.34L267.09 465.43L268.52 465.51L269.95 465.6L271.39 465.67L272.83 465.75L274.27 465.82L275.71 465.89L277.16 465.96L278.61 466.02L280.06 466.08L281.51 466.14L282.97 466.19L284.42 466.24L285.88 466.29L287.34 466.34L288.8 466.38L290.27 466.42L291.73 466.45L293.2 466.49L294.67 466.51L296.13 466.54L297.6 466.56L299.07 466.58L300.54 466.6L302.01 466.62L303.48 466.63L304.96 466.63L306.43 466.64L307.9 466.64L309.37 466.64L310.84 466.63L312.32 466.63L313.79 466.62L315.26 466.6L316.73 466.58L318.2 466.56L319.67 466.54L321.13 466.51L322.6 466.49L324.07 466.45L325.53 466.42L327 466.38L328.46 466.34L329.92 466.29L331.38 466.24L332.83 466.19L334.29 466.14L335.74 466.08L337.19 466.02L338.64 465.96L340.09 465.89L341.53 465.82L342.97 465.75L344.41 465.67L345.85 465.6L347.28 465.51L348.71 465.43L350.14 465.34L351.56 465.25L352.98 465.16L354.4 465.06L355.81 464.96L357.22 464.86L358.62 464.75L360.03 464.65L361.42 464.53L362.82 464.42L364.21 464.3L365.59 464.18L366.97 464.06L368.35 463.93L369.72 463.8L371.09 463.67L372.45 463.54L373.81 463.4L375.16 463.26L376.51 463.12L377.85 462.97L379.19 462.82L380.52 462.67L381.85 462.51L383.17 462.36L384.48 462.2L385.79 462.03L387.09 461.87M456.84 445.01L457.53 444.7L458.2 444.38L458.86 444.06L459.51 443.74L460.15 443.42L460.78 443.1L461.4 442.78L462 442.45L462.59 442.13L463.17 441.8L463.74 441.47L464.3 441.14L464.85 440.81L465.38 440.48L465.9 440.15L466.41 439.82L466.91 439.48L467.39 439.15L467.87 438.81L468.33 438.47L468.78 438.13L469.21 437.79L469.64 437.45L470.05 437.11L470.45 436.77L470.84 436.42L471.21 436.08L471.57 435.74L471.92 435.39L472.26 435.04L472.59 434.7L472.9 434.35L473.2 434L473.49 433.65L473.76 433.3L474.02 432.95L474.27 432.6L474.51 432.25L474.73 431.9L474.94 431.55L475.14 431.19L475.33 430.84L475.5 430.49L475.66 430.13L475.81 429.78L475.94 429.43L476.06 429.07L476.17 428.72L476.27 428.36L476.35 428.01L476.42 427.65L476.48 427.3L476.53 426.94L476.56 426.58L476.58 426.23L476.58 425.87L476.58 425.52L476.56 425.16L476.53 424.81L476.48 424.45L476.42 424.09L476.35 423.74L476.27 423.38L476.17 423.03L476.06 422.67L475.94 422.32L475.81 421.97L475.66 421.61L475.5 421.26L475.33 420.9L475.14 420.55L474.94 420.2L474.73 419.85L474.51 419.5L474.27 419.14L474.02 418.79L473.76 418.44L473.49 418.09L473.2 417.74L472.9 417.4L472.59 417.05L472.26 416.7L471.92 416.36L471.57 416.01L471.21 415.67L470.84 415.32L470.45 414.98L470.05 414.64L469.64 414.29L469.21 413.95L468.78 413.61L468.33 413.27L467.87 412.94L467.39 412.6L466.91 412.26L466.41 411.93L465.9 411.6L465.38 411.26L464.85 410.93L464.3 410.6L463.74 410.27L463.17 409.94L462.59 409.62L462 409.29L461.4 408.97L460.78 408.64L460.15 408.32L459.51 408L458.86 407.68L458.2 407.36L457.53 407.05L456.84 406.73M387.09 389.88L385.79 389.71L384.48 389.55L383.17 389.39L381.85 389.23L380.52 389.08L379.19 388.92L377.85 388.78L376.51 388.63L375.16 388.49L373.81 388.35L372.45 388.21L371.09 388.07L369.72 387.94L368.35 387.81L366.97 387.69L365.59 387.56L364.21 387.44L362.82 387.33L361.42 387.21L360.03 387.1L358.62 386.99L357.22 386.89L355.81 386.78L354.4 386.68L352.98 386.59L351.56 386.49L350.14 386.4L348.71 386.32L347.28 386.23L345.85 386.15L344.41 386.07L342.97 386L341.53 385.92L340.09 385.85L338.64 385.79L337.19 385.72L335.74 385.66L334.29 385.61L332.83 385.55L331.38 385.5L329.92 385.45L328.46 385.41L327 385.37L325.53 385.33L324.07 385.29L322.6 385.26L321.13 385.23L319.67 385.2L318.2 385.18L316.73 385.16L315.26 385.14L313.79 385.13L312.32 385.12L310.84 385.11L309.37 385.11L307.9 385.1L306.43 385.11L304.96 385.11L303.48 385.12L302.01 385.13L300.54 385.14L299.07 385.16L297.6 385.18L296.13 385.2L294.67 385.23L293.2 385.26L291.73 385.29L290.27 385.33L288.8 385.37L287.34 385.41L285.88 385.45L284.42 385.5L282.97 385.55L281.51 385.61L280.06 385.66L278.61 385.72L277.16 385.79L275.71 385.85L274.27 385.92L272.83 386L271.39 386.07L269.95 386.15L268.52 386.23L267.09 386.32L265.66 386.4L264.24 386.49L262.82 386.59L261.4 386.68L259.99 386.78L258.58 386.89L257.18 386.99L255.77 387.1L254.38 387.21L252.98 387.33L251.59 387.44L250.21 387.56L248.83 387.69L247.45 387.81L246.08 387.94L244.71 388.07L243.35 388.21L241.99 388.35L240.64 388.49L239.29 388.63L237.95 388.78L236.61 388.92L235.28 389.08L233.95 389.23L232.63 389.39L231.32 389.55L230.01 389.71L228.71 389.88M158.96 406.73L158.27 407.05L157.6 407.36L156.94 407.68L156.29 408L155.65 408.32L155.02 408.64L154.4 408.97L153.8 409.29L153.21 409.62L152.63 409.94L152.06 410.27L151.5 410.6L150.95 410.93L150.42 411.26L149.9 411.6L149.39 411.93L148.89 412.26L148.41 412.6L147.93 412.94L147.47 413.27L147.02 413.61L146.59 413.95L146.16 414.29L145.75 414.64L145.35 414.98L144.96 415.32L144.59 415.67L144.23 416.01L143.88 416.36L143.54 416.7L143.21 417.05L142.9 417.4L142.6 417.74L142.31 418.09L142.04 418.44L141.78 418.79L141.53 419.14L141.29 419.5L141.07 419.85L140.86 420.2L140.66 420.55L140.47 420.9L140.3 421.26L140.14 421.61L139.99 421.97L139.86 422.32L139.74 422.67L139.63 423.03L139.53 423.38L139.45 423.74L139.38 424.09L139.32 424.45L139.27 424.81L139.24 425.16L139.22 425.52L139.22 425.87L139.22 426.23L139.24 426.58L139.27 426.94L139.32 427.3L139.38 427.65L139.45 428.01L139.53 428.36L139.63 428.72L139.74 429.07L139.86 429.43L139.99 429.78L140.14 430.13L140.3 430.49L140.47 430.84L140.66 431.19L140.86 431.55L141.07 431.9L141.29 432.25L141.53 432.6L141.78 432.95L142.04 433.3L142.31 433.65L142.6 434L142.9 434.35L143.21 434.7L143.54 435.04L143.88 435.39L144.23 435.74L144.59 436.08L144.96 436.42L145.35 436.77L145.75 437.11L146.16 437.45L146.59 437.79L147.02 438.13L147.47 438.47L147.93 438.81L148.41 439.15L148.89 439.48L149.39 439.82L149.9 440.15L150.42 440.48L150.95 440.81L151.5 441.14L152.06 441.47L152.63 441.8L153.21 442.13L153.8 442.45L154.4 442.78L155.02 443.1L155.65 443.42L156.29 443.74L156.94 444.06L157.6 444.38L158.27 444.7L158.96 445.01" fill="none" stroke="#ff00ff" stroke-width="1" shape-rendering="crispEdges"/><path d="M199.01 457.12L199.97 457.34L200.93 457.57L201.9 457.8L202.88 458.02L203.87 458.24L204.86 458.46L205.86 458.67L206.88 458.89L207.89 459.1L208.92 459.31L209.95 459.52L210.99 459.72L212.04 459.93L213.1 460.13L214.16 460.33L215.23 460.52L216.3 460.72L217.39 460.91L218.48 461.1L219.58 461.29L220.68 461.47L221.79 461.65L222.91 461.83L224.03 462.01L225.16 462.19L226.3 462.36L227.44 462.53L228.59 462.7L229.75 462.87L230.91 463.03L232.07 463.19L233.25 463.35L234.42 463.51L235.61 463.66L236.8 463.81L237.99 463.96L239.19 464.11L240.4 464.25L241.61 464.39L242.82 464.53L244.04 464.66L245.27 464.8L246.5 464.93L247.73 465.06L248.97 465.18L250.22 465.31L251.46 465.43L252.72 465.54L253.97 465.66L255.23 465.77L256.5 465.88L257.77 465.99L259.04 466.09L260.32 466.19L261.6 466.29L262.88 466.39L264.17 466.48L265.46 466.57L266.75 466.66L268.05 466.75L269.34 466.83L270.65 466.91L271.95 466.99L273.26 467.06L274.57 467.13L275.88 467.2L277.2 467.27L278.52 467.33L279.84 467.39L281.16 467.45L282.48 467.51L283.81 467.56L285.14 467.61L286.47 467.65L287.8 467.7L289.13 467.74L290.47 467.78L291.8 467.81L293.14 467.84L294.48 467.87L295.82 467.9L297.16 467.93L298.5 467.95L299.84 467.96L301.18 467.98L302.53 467.99L303.87 468L305.21 468.01L306.56 468.01L307.9 468.02L309.24 468.01L310.59 468.01L311.93 468L313.27 467.99L314.62 467.98L315.96 467.96L317.3 467.95L318.64 467.93L319.98 467.9L321.32 467.87L322.66 467.84L324 467.81L325.33 467.78L326.67 467.74L328 467.7L329.33 467.65L330.66 467.61L331.99 467.56L333.32 467.51L334.64 467.45L335.96 467.39L337.28 467.33L338.6 467.27L339.92 467.2L341.23 467.13L342.54 467.06L343.85 466.99L345.15 466.91L346.46 466.83L347.75 466.75L349.05 466.66L350.34 466.57L351.63 466.48L352.92 466.39L354.2 466.29L355.48 466.19L356.76 466.09L358.03 465.99L359.3 465.88L360.57 465.77L361.83 465.66L363.08 465.54L364.34 465.43L365.58 465.31L366.83 465.18L368.07 465.06L369.3 464.93L370.53 464.8L371.76 464.66L372.98 464.53L374.19 464.39L375.4 464.25L376.61 464.11L377.81 463.96L379 463.81L380.19 463.66L381.38 463.51L382.55 463.35L383.73 463.19L384.89 463.03L386.05 462.87L387.21 462.7L388.36 462.53L389.5 462.36L390.64 462.19L391.77 462.01L392.89 461.83L394.01 461.65L395.12 461.47L396.22 461.29L397.32 461.1L398.41 460.91L399.5 460.72L400.57 460.52L401.64 460.33L402.7 460.13L403.76 459.93L404.81 459.72L405.85 459.52L406.88 459.31L407.91 459.1L408.92 458.89L409.94 458.67L410.94 458.46L411.93 458.24L412.92 458.02L413.9 457.8L414.87 457.57L415.83 457.34L416.79 457.12L417.73 456.88L418.67 456.65L419.6 456.42L420.52 456.18L421.43 455.94L422.33 455.7L423.23 455.46L424.12 455.22L424.99 454.97L425.86 454.72L426.72 454.47L427.57 454.22L428.41 453.97L429.24 453.71L430.07 453.46L430.88 453.2L431.68 452.94L432.48 452.67L433.26 452.41L434.04 452.15L434.8 451.88L435.56 451.61L436.31 451.34L437.04 451.07L437.77 450.8L438.49 450.52L439.2 450.25L439.89 449.97L440.58 449.69L441.26 449.41L441.92 449.13L442.58 448.84L443.23 448.56L443.86 448.27L444.49 447.98L445.1 447.7L445.71 447.41L446.3 447.11L446.89 446.82L447.46 446.53L448.02 446.23L448.57 445.94L449.12 445.64L449.65 445.34L450.17 445.04L450.67 444.74L451.17 444.44L451.66 444.14L452.14 443.83L452.6 443.53L453.05 443.22L453.5 442.92L453.93 442.61L454.35 442.3L454.76 441.99L455.16 441.68L455.55 441.37L455.92 441.06L456.29 440.75L456.64 440.43L456.98 440.12L457.31 439.8L457.63 439.49L457.94 439.17L458.24 438.85L458.52 438.54L458.8 438.22L459.06 437.9L459.31 437.58L459.55 437.26L459.78 436.94L459.99 436.62L460.2 436.3L460.39 435.98L460.57 435.66L460.74 435.34L460.9 435.01L461.04 434.69L461.18 434.37L461.3 434.04L461.41 433.72L461.51 433.4L461.6 433.07L461.68 432.75L461.74 432.42L461.79 432.1L461.83 431.77L461.86 431.45L461.88 431.12L461.89 430.8L461.88 430.48L461.86 430.15L461.83 429.83L461.79 429.5L461.74 429.18L461.68 428.85L461.6 428.53L461.51 428.2L461.41 427.88L461.3 427.56L461.18 427.23L461.04 426.91L460.9 426.59L460.74 426.26L460.57 425.94L460.39 425.62L460.2 425.3L459.99 424.98L459.78 424.66L459.55 424.34L459.31 424.02L459.06 423.7L458.8 423.38L458.52 423.06L458.24 422.75L457.94 422.43L457.63 422.11L457.31 421.8L456.98 421.48L456.64 421.17L456.29 420.85L455.92 420.54L455.55 420.23L455.16 419.92L454.76 419.61L454.35 419.3L453.93 418.99L453.5 418.68L453.05 418.38L452.6 418.07L452.14 417.77L451.66 417.46L451.17 417.16L450.67 416.86L450.17 416.56L449.65 416.26L449.12 415.96L448.57 415.66L448.02 415.37L447.46 415.07L446.89 414.78L446.3 414.49L445.71 414.19L445.1 413.9L444.49 413.62L443.86 413.33L443.23 413.04L442.58 412.76L441.92 412.47L441.26 412.19L440.58 411.91L439.89 411.63L439.2 411.35L438.49 411.08L437.77 410.8L437.04 410.53L436.31 410.26L435.56 409.99L434.8 409.72L434.04 409.45L433.26 409.19L432.48 408.93L431.68 408.66L430.88 408.4L430.07 408.14L429.24 407.89L428.41 407.63L427.57 407.38L426.72 407.13L425.86 406.88L424.99 406.63L424.12 406.38L423.23 406.14L422.33 405.9L421.43 405.66L420.52 405.42L419.6 405.18L418.67 404.95L417.73 404.72L416.79 404.48L415.83 404.26L414.87 404.03L413.9 403.8L412.92 403.58L411.93 403.36L410.94 403.14L409.94 402.93L408.92 402.71L407.91 402.5L406.88 402.29L405.85 402.08L404.81 401.88L403.76 401.67L402.7 401.47L401.64 401.27L400.57 401.08L399.5 400.88L398.41 400.69L397.32 400.5L396.22 400.31L395.12 400.13L394.01 399.95L392.89 399.77L391.77 399.59L390.64 399.41L389.5 399.24L388.36 399.07L387.21 398.9L386.05 398.73L384.89 398.57L383.73 398.41L382.55 398.25L381.38 398.09L380.19 397.94L379 397.79L377.81 397.64L376.61 397.49L375.4 397.35L374.19 397.21L372.98 397.07L371.76 396.94L370.53 396.8L369.3 396.67L368.07 396.54L366.83 396.42L365.58 396.29L364.34 396.17L363.08 396.06L361.83 395.94L360.57 395.83L359.3 395.72L358.03 395.61L356.76 395.51L355.48 395.41L354.2 395.31L352.92 395.21L351.63 395.12L350.34 395.03L349.05 394.94L347.75 394.85L346.46 394.77L345.15 394.69L343.85 394.61L342.54 394.54L341.23 394.47L339.92 394.4L338.6 394.33L337.28 394.27L335.96 394.21L334.64 394.15L333.32 394.09L331.99 394.04L330.66 393.99L329.33 393.95L328 393.9L326.67 393.86L325.33 393.82L324 393.79L322.66 393.76L321.32 393.73L319.98 393.7L318.64 393.67L317.3 393.65L315.96 393.64L314.62 393.62L313.27 393.61L311.93 393.6L310.59 393.59L309.24 393.59L307.9 393.58L306.56 393.59L305.21 393.59L303.87 393.6L302.53 393.61L301.18 393.62L299.84 393.64L298.5 393.65L297.16 393.67L295.82 393.7L294.48 393.73L293.14 393.76L291.8 393.79L290.47 393.82L289.13 393.86L287.8 393.9L286.47 393.95L285.14 393.99L283.81 394.04L282.48 394.09L281.16 394.15L279.84 394.21L278.52 394.27L277.2 394.33L275.88 394.4L274.57 394.47L273.26 394.54L271.95 394.61L270.65 394.69L269.34 394.77L268.05 394.85L266.75 394.94L265.46 395.03L264.17 395.12L262.88 395.21L261.6 395.31L260.32 395.41L259.04 395.51L257.77 395.61L256.5 395.72L255.23 395.83L253.97 395.94L252.72 396.06L251.46 396.17L250.22 396.29L248.97 396.42L247.73 396.54L246.5 396.67L245.27 396.8L244.04 396.94L242.82 397.07L241.61 397.21L240.4 397.35L239.19 397.49L237.99 397.64L236.8 397.79L235.61 397.94L234.42 398.09L233.25 398.25L232.07 398.41L230.91 398.57L229.75 398.73L228.59 398.9L227.44 399.07L226.3 399.24L225.16 399.41L224.03 399.59L222.91 399.77L221.79 399.95L220.68 400.13L219.58 400.31L218.48 400.5L217.39 400.69L216.3 400.88L215.23 401.08L214.16 401.27L213.1 401.47L212.04 401.67L210.99 401.88L209.95 402.08L208.92 402.29L207.89 402.5L206.88 402.71L205.86 402.93L204.86 403.14L203.87 403.36L202.88 403.58L201.9 403.8L200.93 404.03L199.97 404.26L199.01 404.48L198.07 404.72L197.13 404.95L196.2 405.18L195.28 405.42L194.37 405.66L193.47 405.9L192.57 406.14L191.68 406.38L190.81 406.63L189.94 406.88L189.08 407.13L188.23 407.38L187.39 407.63L186.56 407.89L185.73 408.14L184.92 408.4L184.12 408.66L183.32 408.93L182.54 409.19L181.76 409.45L181 409.72L180.24 409.99L179.49 410.26L178.76 410.53L178.03 410.8L177.31 411.08L176.6 411.35L175.91 411.63L175.22 411.91L174.54 412.19L173.88 412.47L173.22 412.76L172.57 413.04L171.94 413.33L171.31 413.62L170.7 413.9L170.09 414.19L169.5 414.49L168.91 414.78L168.34 415.07L167.78 415.37L167.23 415.66L166.68 415.96L166.15 416.26L165.63 416.56L165.13 416.86L164.63 417.16L164.14 417.46L163.66 417.77L163.2 418.07L162.75 418.38L162.3 418.68L161.87 418.99L161.45 419.3L161.04 419.61L160.64 419.92L160.25 420.23L159.88 420.54L159.51 420.85L159.16 421.17L158.82 421.48L158.49 421.8L158.17 422.11L157.86 422.43L157.56 422.75L157.28 423.06L157 423.38L156.74 423.7L156.49 424.02L156.25 424.34L156.02 424.66L155.81 424.98L155.6 425.3L155.41 425.62L155.23 425.94L155.06 426.26L154.9 426.59L154.76 426.91L154.62 427.23L154.5 427.56L154.39 427.88L154.29 428.2L154.2 428.53L154.12 428.85L154.06 429.18L154.01 429.5L153.97 429.83L153.94 430.15L153.92 430.48L153.91 430.8L153.92 431.12L153.94 431.45L153.97 431.77L154.01 432.1L154.06 432.42L154.12 432.75L154.2 433.07L154.29 433.4L154.39 433.72L154.5 434.04L154.62 434.37L154.76 434.69L154.9 435.01L155.06 435.34L155.23 435.66L155.41 435.98L155.6 436.3L155.81 436.62L156.02 436.94L156.25 437.26L156.49 437.58L156.74 437.9L157 438.22L157.28 438.54L157.56 438.85L157.86 439.17L158.17 439.49L158.49 439.8L158.82 440.12L159.16 440.43L159.51 440.75L159.88 441.06L160.25 441.37L160.64 441.68L161.04 441.99L161.45 442.3L161.87 442.61L162.3 442.92L162.75 443.22L163.2 443.53L163.66 443.83L164.14 444.14L164.63 444.44L165.13 444.74L165.63 445.04L166.15 445.34L166.68 445.64L167.23 445.94L167.78 446.23L168.34 446.53L168.91 446.82L169.5 447.11L170.09 447.41L170.7 447.7L171.31 447.98L171.94 448.27L172.57 448.56L173.22 448.84L173.88 449.13L174.54 449.41L175.22 449.69L175.91 449.97L176.6 450.25L177.31 450.52L178.03 450.8L178.76 451.07L179.49 451.34L180.24 451.61L181 451.88L181.76 452.15L182.54 452.41L183.32 452.67L184.12 452.94L184.92 453.2L185.73 453.46L186.56 453.71L187.39 453.97L188.23 454.22L189.08 454.47L189.94 454.72L190.81 454.97L191.68 455.22L192.57 455.46L193.47 455.7L194.37 455.94L195.28 456.18L196.2 456.42L197.13 456.65L198.07 456.88L199.01 457.12" fill="none" stroke="#ff0000" stroke-width="1" shape-rendering="crispEdges"/><path d="M210.51 459.26L211.36 459.47L212.22 459.67L213.09 459.87L213.97 460.07L214.85 460.27L215.74 460.46L216.64 460.66L217.54 460.85L218.45 461.04L219.37 461.23L220.29 461.41L221.22 461.6L222.16 461.78L223.1 461.96L224.06 462.14L225.01 462.31L225.97 462.49L226.94 462.66L227.92 462.83L228.9 462.99L229.89 463.16L230.88 463.32L231.88 463.48L232.89 463.64L233.9 463.8L234.91 463.96L235.94 464.11L236.96 464.26L238 464.41L239.03 464.55L240.08 464.7L241.13 464.84L242.18 464.98L243.24 465.12L244.3 465.25L245.37 465.39L246.45 465.52L247.52 465.65L248.61 465.77L249.69 465.9L250.78 466.02L251.88 466.14L252.98 466.25L254.08 466.37L255.19 466.48L256.31 466.59L257.42 466.7L258.54 466.8L259.67 466.91L260.79 467.01L261.92 467.1L263.06 467.2L264.2 467.29L265.34 467.38L266.48 467.47L267.63 467.56L268.78 467.64L269.94 467.72L271.09 467.8L272.25 467.88L273.42 467.95L274.58 468.03L275.75 468.09L276.92 468.16L278.09 468.23L279.26 468.29L280.44 468.35L281.62 468.4L282.8 468.46L283.98 468.51L285.17 468.56L286.35 468.6L287.54 468.65L288.73 468.69L289.92 468.73L291.11 468.77L292.31 468.8L293.5 468.83L294.7 468.86L295.9 468.89L297.09 468.91L298.29 468.93L299.49 468.95L300.69 468.97L301.89 468.98L303.09 468.99L304.29 469L305.5 469.01L306.7 469.01L307.9 469.01L309.1 469.01L310.3 469.01L311.51 469L312.71 468.99L313.91 468.98L315.11 468.97L316.31 468.95L317.51 468.93L318.71 468.91L319.9 468.89L321.1 468.86L322.3 468.83L323.49 468.8L324.69 468.77L325.88 468.73L327.07 468.69L328.26 468.65L329.45 468.6L330.63 468.56L331.82 468.51L333 468.46L334.18 468.4L335.36 468.35L336.54 468.29L337.71 468.23L338.88 468.16L340.05 468.09L341.22 468.03L342.38 467.95L343.55 467.88L344.71 467.8L345.86 467.72L347.02 467.64L348.17 467.56L349.32 467.47L350.46 467.38L351.6 467.29L352.74 467.2L353.88 467.1L355.01 467.01L356.13 466.91L357.26 466.8L358.38 466.7L359.49 466.59L360.61 466.48L361.72 466.37L362.82 466.25L363.92 466.14L365.02 466.02L366.11 465.9L367.19 465.77L368.28 465.65L369.35 465.52L370.43 465.39L371.5 465.25L372.56 465.12L373.62 464.98L374.67 464.84L375.72 464.7L376.77 464.55L377.8 464.41L378.84 464.26L379.86 464.11L380.89 463.96L381.9 463.8L382.91 463.64L383.92 463.48L384.92 463.32L385.91 463.16L386.9 462.99L387.88 462.83L388.86 462.66L389.83 462.49L390.79 462.31L391.74 462.14L392.7 461.96L393.64 461.78L394.58 461.6L395.51 461.41L396.43 461.23L397.35 461.04L398.26 460.85L399.16 460.66L400.06 460.46L400.95 460.27L401.83 460.07L402.71 459.87L403.58 459.67L404.44 459.47L405.29 459.26L406.14 459.06L406.97 458.85L407.81 458.64L408.63 458.43L409.45 458.22L410.25 458L411.05 457.78L411.85 457.57L412.63 457.35L413.41 457.12L414.18 456.9L414.94 456.68L415.69 456.45L416.43 456.22L417.17 455.99L417.9 455.76L418.62 455.53L419.33 455.29L420.03 455.06L420.72 454.82L421.41 454.58L422.08 454.34L422.75 454.1L423.41 453.86L424.06 453.61L424.7 453.37L425.33 453.12L425.96 452.87L426.57 452.62L427.18 452.37L427.77 452.12L428.36 451.87L428.94 451.61L429.51 451.35L430.07 451.1L430.62 450.84L431.16 450.58L431.69 450.32L432.21 450.06L432.73 449.79L433.23 449.53L433.72 449.27L434.21 449L434.68 448.73L435.15 448.47L435.6 448.2L436.05 447.93L436.48 447.66L436.91 447.38L437.32 447.11L437.73 446.84L438.13 446.56L438.51 446.29L438.89 446.01L439.26 445.74L439.61 445.46L439.96 445.18L440.29 444.9L440.62 444.62L440.94 444.34L441.24 444.06L441.54 443.78L441.82 443.5L442.1 443.22L442.37 442.93L442.62 442.65L442.87 442.36L443.1 442.08L443.32 441.79L443.54 441.51L443.74 441.22L443.93 440.93L444.12 440.65L444.29 440.36L444.45 440.07L444.6 439.78L444.75 439.5L444.88 439.21L445 438.92L445.11 438.63L445.21 438.34L445.29 438.05L445.37 437.76L445.44 437.47L445.5 437.18L445.55 436.89L445.58 436.6L445.61 436.31L445.63 436.02L445.63 435.73L445.63 435.44L445.61 435.15L445.58 434.86L445.55 434.57L445.5 434.28L445.44 433.99L445.37 433.7L445.29 433.41L445.21 433.12L445.11 432.83L445 432.54L444.88 432.25L444.75 431.96L444.6 431.67L444.45 431.38L444.29 431.09L444.12 430.81L443.93 430.52L443.74 430.23L443.54 429.95L443.32 429.66L443.1 429.38L442.87 429.09L442.62 428.81L442.37 428.52L442.1 428.24L441.82 427.96L441.54 427.67L441.24 427.39L440.94 427.11L440.62 426.83L440.29 426.55L439.96 426.27L439.61 426L439.26 425.72L438.89 425.44L438.51 425.17L438.13 424.89L437.73 424.62L437.32 424.34L436.91 424.07L436.48 423.8L436.05 423.53L435.6 423.26L435.15 422.99L434.68 422.72L434.21 422.45L433.72 422.19L433.23 421.92L432.73 421.66L432.21 421.4L431.69 421.14L431.16 420.87L430.62 420.62L430.07 420.36L429.51 420.1L428.94 419.84L428.36 419.59L427.77 419.34L427.18 419.08L426.57 418.83L425.96 418.58L425.33 418.33L424.7 418.09L424.06 417.84L423.41 417.6L422.75 417.36L422.08 417.11L421.41 416.87L420.72 416.63L420.03 416.4L419.33 416.16L418.62 415.93L417.9 415.69L417.17 415.46L416.43 415.23L415.69 415.01L414.94 414.78L414.18 414.55L413.41 414.33L412.63 414.11L411.85 413.89L411.05 413.67L410.25 413.45L409.45 413.24L408.63 413.03L407.81 412.81L406.97 412.6L406.14 412.4L405.29 412.19L404.44 411.99L403.58 411.78L402.71 411.58L401.83 411.38L400.95 411.19L400.06 410.99L399.16 410.8L398.26 410.61L397.35 410.42L396.43 410.23L395.51 410.04L394.58 409.86L393.64 409.68L392.7 409.5L391.74 409.32L390.79 409.14L389.83 408.97L388.86 408.8L387.88 408.63L386.9 408.46L385.91 408.29L384.92 408.13L383.92 407.97L382.91 407.81L381.9 407.65L380.89 407.5L379.86 407.35L378.84 407.19L377.8 407.05L376.77 406.9L375.72 406.76L374.67 406.61L373.62 406.47L372.56 406.34L371.5 406.2L370.43 406.07L369.35 405.94L368.28 405.81L367.19 405.68L366.11 405.56L365.02 405.44L363.92 405.32L362.82 405.2L361.72 405.09L360.61 404.97L359.49 404.86L358.38 404.76L357.26 404.65L356.13 404.55L355.01 404.45L353.88 404.35L352.74 404.25L351.6 404.16L350.46 404.07L349.32 403.98L348.17 403.89L347.02 403.81L345.86 403.73L344.71 403.65L343.55 403.57L342.38 403.5L341.22 403.43L340.05 403.36L338.88 403.29L337.71 403.23L336.54 403.17L335.36 403.11L334.18 403.05L333 403L331.82 402.95L330.63 402.9L329.45 402.85L328.26 402.81L327.07 402.76L325.88 402.73L324.69 402.69L323.49 402.65L322.3 402.62L321.1 402.59L319.9 402.57L318.71 402.54L317.51 402.52L316.31 402.5L315.11 402.49L313.91 402.47L312.71 402.46L311.51 402.45L310.3 402.45L309.1 402.44L307.9 402.44L306.7 402.44L305.5 402.45L304.29 402.45L303.09 402.46L301.89 402.47L300.69 402.49L299.49 402.5L298.29 402.52L297.09 402.54L295.9 402.57L294.7 402.59L293.5 402.62L292.31 402.65L291.11 402.69L289.92 402.73L288.73 402.76L287.54 402.81L286.35 402.85L285.17 402.9L283.98 402.95L282.8 403L281.62 403.05L280.44 403.11L279.26 403.17L278.09 403.23L276.92 403.29L275.75 403.36L274.58 403.43L273.42 403.5L272.25 403.57L271.09 403.65L269.94 403.73L268.78 403.81L267.63 403.89L266.48 403.98L265.34 404.07L264.2 404.16L263.06 404.25L261.92 404.35L260.79 404.45L259.67 404.55L258.54 404.65L257.42 404.76L256.31 404.86L255.19 404.97L254.08 405.09L252.98 405.2L251.88 405.32L250.78 405.44L249.69 405.56L248.61 405.68L247.52 405.81L246.45 405.94L245.37 406.07L244.3 406.2L243.24 406.34L242.18 406.47L241.13 406.61L240.08 406.76L239.03 406.9L238 407.05L236.96 407.19L235.94 407.35L234.91 407.5L233.9 407.65L232.89 407.81L231.88 407.97L230.88 408.13L229.89 408.29L228.9 408.46L227.92 408.63L226.94 408.8L225.97 408.97L225.01 409.14L224.06 409.32L223.1 409.5L222.16 409.68L221.22 409.86L220.29 410.04L219.37 410.23L218.45 410.42L217.54 410.61L216.64 410.8L215.74 410.99L214.85 411.19L213.97 411.38L213.09 411.58L212.22 411.78L211.36 411.99L210.51 412.19L209.66 412.4L208.83 412.6L207.99 412.81L207.17 413.03L206.35 413.24L205.55 413.45L204.75 413.67L203.95 413.89L203.17 414.11L202.39 414.33L201.62 414.55L200.86 414.78L200.11 415.01L199.37 415.23L198.63 415.46L197.9 415.69L197.18 415.93L196.47 416.16L195.77 416.4L195.08 416.63L194.39 416.87L193.72 417.11L193.05 417.36L192.39 417.6L191.74 417.84L191.1 418.09L190.47 418.33L189.84 418.58L189.23 418.83L188.62 419.08L188.03 419.34L187.44 419.59L186.86 419.84L186.29 420.1L185.73 420.36L185.18 420.62L184.64 420.87L184.11 421.14L183.59 421.4L183.07 421.66L182.57 421.92L182.08 422.19L181.59 422.45L181.12 422.72L180.65 422.99L180.2 423.26L179.75 423.53L179.32 423.8L178.89 424.07L178.48 424.34L178.07 424.62L177.67 424.89L177.29 425.17L176.91 425.44L176.54 425.72L176.19 426L175.84 426.27L175.51 426.55L175.18 426.83L174.86 427.11L174.56 427.39L174.26 427.67L173.98 427.96L173.7 428.24L173.43 428.52L173.18 428.81L172.93 429.09L172.7 429.38L172.48 429.66L172.26 429.95L172.06 430.23L171.87 430.52L171.68 430.81L171.51 431.09L171.35 431.38L171.2 431.67L171.05 431.96L170.92 432.25L170.8 432.54L170.69 432.83L170.59 433.12L170.51 433.41L170.43 433.7L170.36 433.99L170.3 434.28L170.25 434.57L170.22 434.86L170.19 435.15L170.17 435.44L170.17 435.73L170.17 436.02L170.19 436.31L170.22 436.6L170.25 436.89L170.3 437.18L170.36 437.47L170.43 437.76L170.51 438.05L170.59 438.34L170.69 438.63L170.8 438.92L170.92 439.21L171.05 439.5L171.2 439.78L171.35 440.07L171.51 440.36L171.68 440.65L171.87 440.93L172.06 441.22L172.26 441.51L172.48 441.79L172.7 442.08L172.93 442.36L173.18 442.65L173.43 442.93L173.7 443.22L173.98 443.5L174.26 443.78L174.56 444.06L174.86 444.34L175.18 444.62L175.51 444.9L175.84 445.18L176.19 445.46L176.54 445.74L176.91 446.01L177.29 446.29L177.67 446.56L178.07 446.84L178.48 447.11L178.89 447.38L179.32 447.66L179.75 447.93L180.2 448.2L180.65 448.47L181.12 448.73L181.59 449L182.08 449.27L182.57 449.53L183.07 449.79L183.59 450.06L184.11 450.32L184.64 450.58L185.18 450.84L185.73 451.1L186.29 451.35L186.86 451.61L187.44 451.87L188.03 452.12L188.62 452.37L189.23 452.62L189.84 452.87L190.47 453.12L191.1 453.37L191.74 453.61L192.39 453.86L193.05 454.1L193.72 454.34L194.39 454.58L195.08 454.82L195.77 455.06L196.47 455.29L197.18 455.53L197.9 455.76L198.63 455.99L199.37 456.22L200.11 456.45L200.86 456.68L201.62 456.9L202.39 457.12L203.17 457.35L203.95 457.57L204.75 457.78L205.55 458L206.35 458.22L207.17 458.43L207.99 458.64L208.83 458.85L209.66 459.06L210.51 459.26" fill="none" stroke="#00ffff" stroke-width="1" shape-rendering="crispEdges"/><path d="M223.56 461.04L224.3 461.22L225.04 461.39L225.79 461.57L226.55 461.74L227.32 461.91L228.09 462.08L228.86 462.24L229.65 462.41L230.44 462.57L231.23 462.74L232.03 462.9L232.84 463.06L233.65 463.21L234.47 463.37L235.29 463.52L236.12 463.68L236.95 463.83L237.79 463.98L238.63 464.12L239.48 464.27L240.34 464.41L241.2 464.55L242.07 464.69L242.94 464.83L243.81 464.97L244.69 465.1L245.58 465.23L246.47 465.36L247.36 465.49L248.26 465.62L249.16 465.74L250.07 465.87L250.99 465.99L251.9 466.11L252.82 466.22L253.75 466.34L254.68 466.45L255.61 466.56L256.55 466.67L257.49 466.78L258.44 466.89L259.39 466.99L260.34 467.09L261.29 467.19L262.25 467.29L263.22 467.38L264.18 467.48L265.15 467.57L266.13 467.66L267.1 467.74L268.08 467.83L269.07 467.91L270.05 467.99L271.04 468.07L272.03 468.15L273.03 468.22L274.02 468.29L275.02 468.37L276.02 468.43L277.03 468.5L278.04 468.56L279.04 468.63L280.06 468.69L281.07 468.74L282.08 468.8L283.1 468.85L284.12 468.9L285.14 468.95L286.16 469L287.19 469.04L288.21 469.09L289.24 469.13L290.27 469.17L291.3 469.2L292.33 469.24L293.36 469.27L294.4 469.3L295.43 469.32L296.47 469.35L297.5 469.37L298.54 469.39L299.58 469.41L300.62 469.43L301.66 469.44L302.7 469.45L303.74 469.46L304.78 469.47L305.82 469.48L306.86 469.48L307.9 469.48L308.94 469.48L309.98 469.48L311.02 469.47L312.06 469.46L313.1 469.45L314.14 469.44L315.18 469.43L316.22 469.41L317.26 469.39L318.3 469.37L319.33 469.35L320.37 469.32L321.4 469.3L322.44 469.27L323.47 469.24L324.5 469.2L325.53 469.17L326.56 469.13L327.59 469.09L328.61 469.04L329.64 469L330.66 468.95L331.68 468.9L332.7 468.85L333.72 468.8L334.73 468.74L335.74 468.69L336.76 468.63L337.76 468.56L338.77 468.5L339.78 468.43L340.78 468.37L341.78 468.29L342.77 468.22L343.77 468.15L344.76 468.07L345.75 467.99L346.73 467.91L347.72 467.83L348.7 467.74L349.67 467.66L350.65 467.57L351.62 467.48L352.58 467.38L353.55 467.29L354.51 467.19L355.46 467.09L356.41 466.99L357.36 466.89L358.31 466.78L359.25 466.67L360.19 466.56L361.12 466.45L362.05 466.34L362.98 466.22L363.9 466.11L364.81 465.99L365.73 465.87L366.64 465.74L367.54 465.62L368.44 465.49L369.33 465.36L370.22 465.23L371.11 465.1L371.99 464.97L372.86 464.83L373.73 464.69L374.6 464.55L375.46 464.41L376.32 464.27L377.17 464.12L378.01 463.98L378.85 463.83L379.68 463.68L380.51 463.52L381.33 463.37L382.15 463.21L382.96 463.06L383.77 462.9L384.57 462.74L385.36 462.57L386.15 462.41L386.94 462.24L387.71 462.08L388.48 461.91L389.25 461.74L390.01 461.57L390.76 461.39L391.5 461.22L392.24 461.04L392.98 460.86L393.7 460.68L394.42 460.5L395.13 460.31L395.84 460.13L396.54 459.94L397.23 459.76L397.92 459.57L398.6 459.38L399.27 459.18L399.94 458.99L400.6 458.8L401.25 458.6L401.89 458.4L402.53 458.2L403.16 458L403.78 457.8L404.4 457.6L405.01 457.39L405.61 457.19L406.2 456.98L406.79 456.77L407.36 456.57L407.93 456.35L408.5 456.14L409.05 455.93L409.6 455.72L410.14 455.5L410.67 455.29L411.2 455.07L411.71 454.85L412.22 454.63L412.72 454.41L413.22 454.19L413.7 453.97L414.18 453.74L414.65 453.52L415.11 453.29L415.56 453.07L416 452.84L416.44 452.61L416.87 452.38L417.29 452.15L417.7 451.92L418.1 451.69L418.49 451.45L418.88 451.22L419.26 450.99L419.62 450.75L419.98 450.51L420.34 450.28L420.68 450.04L421.01 449.8L421.34 449.56L421.66 449.32L421.97 449.08L422.27 448.84L422.56 448.6L422.84 448.36L423.11 448.12L423.38 447.87L423.63 447.63L423.88 447.38L424.12 447.14L424.35 446.89L424.57 446.65L424.78 446.4L424.99 446.16L425.18 445.91L425.37 445.66L425.54 445.41L425.71 445.16L425.87 444.92L426.02 444.67L426.16 444.42L426.29 444.17L426.41 443.92L426.52 443.67L426.63 443.42L426.72 443.17L426.81 442.92L426.89 442.67L426.96 442.41L427.01 442.16L427.06 441.91L427.11 441.66L427.14 441.41L427.16 441.16L427.17 440.91L427.18 440.65L427.17 440.4L427.16 440.15L427.14 439.9L427.11 439.65L427.06 439.4L427.01 439.15L426.96 438.89L426.89 438.64L426.81 438.39L426.72 438.14L426.63 437.89L426.52 437.64L426.41 437.39L426.29 437.14L426.16 436.89L426.02 436.64L425.87 436.39L425.71 436.14L425.54 435.9L425.37 435.65L425.18 435.4L424.99 435.15L424.78 434.91L424.57 434.66L424.35 434.42L424.12 434.17L423.88 433.92L423.63 433.68L423.38 433.44L423.11 433.19L422.84 432.95L422.56 432.71L422.27 432.47L421.97 432.23L421.66 431.99L421.34 431.75L421.01 431.51L420.68 431.27L420.34 431.03L419.98 430.8L419.62 430.56L419.26 430.32L418.88 430.09L418.49 429.86L418.1 429.62L417.7 429.39L417.29 429.16L416.87 428.93L416.44 428.7L416 428.47L415.56 428.24L415.11 428.02L414.65 427.79L414.18 427.57L413.7 427.34L413.22 427.12L412.72 426.9L412.22 426.68L411.71 426.46L411.2 426.24L410.67 426.02L410.14 425.81L409.6 425.59L409.05 425.38L408.5 425.17L407.93 424.95L407.36 424.74L406.79 424.53L406.2 424.33L405.61 424.12L405.01 423.91L404.4 423.71L403.78 423.51L403.16 423.31L402.53 423.11L401.89 422.91L401.25 422.71L400.6 422.51L399.94 422.32L399.27 422.12L398.6 421.93L397.92 421.74L397.23 421.55L396.54 421.37L395.84 421.18L395.13 420.99L394.42 420.81L393.7 420.63L392.98 420.45L392.24 420.27L391.5 420.09L390.76 419.92L390.01 419.74L389.25 419.57L388.48 419.4L387.71 419.23L386.94 419.06L386.15 418.9L385.36 418.73L384.57 418.57L383.77 418.41L382.96 418.25L382.15 418.09L381.33 417.94L380.51 417.78L379.68 417.63L378.85 417.48L378.01 417.33L377.17 417.19L376.32 417.04L375.46 416.9L374.6 416.76L373.73 416.62L372.86 416.48L371.99 416.34L371.11 416.21L370.22 416.08L369.33 415.94L368.44 415.82L367.54 415.69L366.64 415.56L365.73 415.44L364.81 415.32L363.9 415.2L362.98 415.08L362.05 414.97L361.12 414.86L360.19 414.74L359.25 414.64L358.31 414.53L357.36 414.42L356.41 414.32L355.46 414.22L354.51 414.12L353.55 414.02L352.58 413.93L351.62 413.83L350.65 413.74L349.67 413.65L348.7 413.57L347.72 413.48L346.73 413.4L345.75 413.32L344.76 413.24L343.77 413.16L342.77 413.09L341.78 413.01L340.78 412.94L339.78 412.88L338.77 412.81L337.76 412.75L336.76 412.68L335.74 412.62L334.73 412.57L333.72 412.51L332.7 412.46L331.68 412.41L330.66 412.36L329.64 412.31L328.61 412.27L327.59 412.22L326.56 412.18L325.53 412.14L324.5 412.11L323.47 412.07L322.44 412.04L321.4 412.01L320.37 411.99L319.33 411.96L318.3 411.94L317.26 411.92L316.22 411.9L315.18 411.88L314.14 411.87L313.1 411.85L312.06 411.84L311.02 411.84L309.98 411.83L308.94 411.83L307.9 411.83L306.86 411.83L305.82 411.83L304.78 411.84L303.74 411.84L302.7 411.85L301.66 411.87L300.62 411.88L299.58 411.9L298.54 411.92L297.5 411.94L296.47 411.96L295.43 411.99L294.4 412.01L293.36 412.04L292.33 412.07L291.3 412.11L290.27 412.14L289.24 412.18L288.21 412.22L287.19 412.27L286.16 412.31L285.14 412.36L284.12 412.41L283.1 412.46L282.08 412.51L281.07 412.57L280.06 412.62L279.04 412.68L278.04 412.75L277.03 412.81L276.02 412.88L275.02 412.94L274.02 413.01L273.03 413.09L272.03 413.16L271.04 413.24L270.05 413.32L269.07 413.4L268.08 413.48L267.1 413.57L266.13 413.65L265.15 413.74L264.18 413.83L263.22 413.93L262.25 414.02L261.29 414.12L260.34 414.22L259.39 414.32L258.44 414.42L257.49 414.53L256.55 414.64L255.61 414.74L254.68 414.86L253.75 414.97L252.82 415.08L251.9 415.2L250.99 415.32L250.07 415.44L249.16 415.56L248.26 415.69L247.36 415.82L246.47 415.94L245.58 416.08L244.69 416.21L243.81 416.34L242.94 416.48L242.07 416.62L241.2 416.76L240.34 416.9L239.48 417.04L238.63 417.19L237.79 417.33L236.95 417.48L236.12 417.63L235.29 417.78L234.47 417.94L233.65 418.09L232.84 418.25L232.03 418.41L231.23 418.57L230.44 418.73L229.65 418.9L228.86 419.06L228.09 419.23L227.32 419.4L226.55 419.57L225.79 419.74L225.04 419.92L224.3 420.09L223.56 420.27L222.82 420.45L222.1 420.63L221.38 420.81L220.67 420.99L219.96 421.18L219.26 421.37L218.57 421.55L217.88 421.74L217.2 421.93L216.53 422.12L215.86 422.32L215.2 422.51L214.55 422.71L213.91 422.91L213.27 423.11L212.64 423.31L212.02 423.51L211.4 423.71L210.79 423.91L210.19 424.12L209.6 424.33L209.01 424.53L208.44 424.74L207.87 424.95L207.3 425.17L206.75 425.38L206.2 425.59L205.66 425.81L205.13 426.02L204.6 426.24L204.09 426.46L203.58 426.68L203.08 426.9L202.58 427.12L202.1 427.34L201.62 427.57L201.15 427.79L200.69 428.02L200.24 428.24L199.8 428.47L199.36 428.7L198.93 428.93L198.51 429.16L198.1 429.39L197.7 429.62L197.31 429.86L196.92 430.09L196.54 430.32L196.18 430.56L195.82 430.8L195.46 431.03L195.12 431.27L194.79 431.51L194.46 431.75L194.14 431.99L193.83 432.23L193.53 432.47L193.24 432.71L192.96 432.95L192.69 433.19L192.42 433.44L192.17 433.68L191.92 433.92L191.68 434.17L191.45 434.42L191.23 434.66L191.02 434.91L190.81 435.15L190.62 435.4L190.43 435.65L190.26 435.9L190.09 436.14L189.93 436.39L189.78 436.64L189.64 436.89L189.51 437.14L189.39 437.39L189.28 437.64L189.17 437.89L189.08 438.14L188.99 438.39L188.91 438.64L188.84 438.89L188.79 439.15L188.74 439.4L188.69 439.65L188.66 439.9L188.64 440.15L188.63 440.4L188.62 440.65L188.63 440.91L188.64 441.16L188.66 441.41L188.69 441.66L188.74 441.91L188.79 442.16L188.84 442.41L188.91 442.67L188.99 442.92L189.08 443.17L189.17 443.42L189.28 443.67L189.39 443.92L189.51 444.17L189.64 444.42L189.78 444.67L189.93 444.92L190.09 445.16L190.26 445.41L190.43 445.66L190.62 445.91L190.81 446.16L191.02 446.4L191.23 446.65L191.45 446.89L191.68 447.14L191.92 447.38L192.17 447.63L192.42 447.87L192.69 448.12L192.96 448.36L193.24 448.6L193.53 448.84L193.83 449.08L194.14 449.32L194.46 449.56L194.79 449.8L195.12 450.04L195.46 450.28L195.82 450.51L196.18 450.75L196.54 450.99L196.92 451.22L197.31 451.45L197.7 451.69L198.1 451.92L198.51 452.15L198.93 452.38L199.36 452.61L199.8 452.84L200.24 453.07L200.69 453.29L201.15 453.52L201.62 453.74L202.1 453.97L202.58 454.19L203.08 454.41L203.58 454.63L204.09 454.85L204.6 455.07L205.13 455.29L205.66 455.5L206.2 455.72L206.75 455.93L207.3 456.14L207.87 456.35L208.44 456.57L209.01 456.77L209.6 456.98L210.19 457.19L210.79 457.39L211.4 457.6L212.02 457.8L212.64 458L213.27 458.2L213.91 458.4L214.55 458.6L215.2 458.8L215.86 458.99L216.53 459.18L217.2 459.38L217.88 459.57L218.57 459.76L219.26 459.94L219.96 460.13L220.67 460.31L221.38 460.5L222.1 460.68L222.82 460.86L223.56 461.04" fill="none" stroke="#00ff00" stroke-width="1" shape-rendering="crispEdges"/><path d="M239.03 462.23L239.64 462.37L240.25 462.51L240.86 462.66L241.48 462.8L242.1 462.94L242.73 463.07L243.37 463.21L244.01 463.35L244.65 463.48L245.3 463.61L245.95 463.74L246.61 463.87L247.27 464L247.94 464.13L248.61 464.26L249.29 464.38L249.97 464.5L250.66 464.62L251.35 464.74L252.04 464.86L252.74 464.98L253.44 465.1L254.15 465.21L254.86 465.32L255.57 465.43L256.29 465.54L257.01 465.65L257.74 465.76L258.47 465.86L259.2 465.97L259.94 466.07L260.68 466.17L261.43 466.27L262.18 466.36L262.93 466.46L263.69 466.55L264.44 466.65L265.21 466.74L265.97 466.83L266.74 466.91L267.51 467L268.29 467.08L269.07 467.17L269.85 467.25L270.63 467.33L271.42 467.41L272.21 467.48L273 467.56L273.79 467.63L274.59 467.7L275.39 467.77L276.19 467.84L277 467.9L277.8 467.97L278.61 468.03L279.43 468.09L280.24 468.15L281.06 468.21L281.87 468.26L282.69 468.32L283.52 468.37L284.34 468.42L285.16 468.47L285.99 468.52L286.82 468.56L287.65 468.6L288.48 468.65L289.32 468.69L290.15 468.73L290.99 468.76L291.83 468.8L292.66 468.83L293.5 468.86L294.35 468.89L295.19 468.92L296.03 468.94L296.88 468.97L297.72 468.99L298.57 469.01L299.41 469.03L300.26 469.05L301.11 469.06L301.95 469.08L302.8 469.09L303.65 469.1L304.5 469.1L305.35 469.11L306.2 469.12L307.05 469.12L307.9 469.12L308.75 469.12L309.6 469.12L310.45 469.11L311.3 469.1L312.15 469.1L313 469.09L313.85 469.08L314.69 469.06L315.54 469.05L316.39 469.03L317.23 469.01L318.08 468.99L318.92 468.97L319.77 468.94L320.61 468.92L321.45 468.89L322.3 468.86L323.14 468.83L323.97 468.8L324.81 468.76L325.65 468.73L326.48 468.69L327.32 468.65L328.15 468.6L328.98 468.56L329.81 468.52L330.64 468.47L331.46 468.42L332.28 468.37L333.11 468.32L333.93 468.26L334.74 468.21L335.56 468.15L336.37 468.09L337.19 468.03L338 467.97L338.8 467.9L339.61 467.84L340.41 467.77L341.21 467.7L342.01 467.63L342.8 467.56L343.59 467.48L344.38 467.41L345.17 467.33L345.95 467.25L346.73 467.17L347.51 467.08L348.29 467L349.06 466.91L349.83 466.83L350.59 466.74L351.36 466.65L352.11 466.55L352.87 466.46L353.62 466.36L354.37 466.27L355.12 466.17L355.86 466.07L356.6 465.97L357.33 465.86L358.06 465.76L358.79 465.65L359.51 465.54L360.23 465.43L360.94 465.32L361.65 465.21L362.36 465.1L363.06 464.98L363.76 464.86L364.45 464.74L365.14 464.62L365.83 464.5L366.51 464.38L367.19 464.26L367.86 464.13L368.53 464L369.19 463.87L369.85 463.74L370.5 463.61L371.15 463.48L371.79 463.35L372.43 463.21L373.07 463.07L373.7 462.94L374.32 462.8L374.94 462.66L375.55 462.51L376.16 462.37L376.77 462.23L377.36 462.08L377.96 461.93L378.54 461.78L379.13 461.63L379.7 461.48L380.27 461.33L380.84 461.18L381.4 461.02L381.96 460.87L382.51 460.71L383.05 460.55L383.59 460.39L384.12 460.23L384.64 460.07L385.16 459.91L385.68 459.75L386.19 459.58L386.69 459.42L387.19 459.25L387.68 459.08L388.16 458.91L388.64 458.74L389.11 458.57L389.58 458.4L390.04 458.23L390.49 458.05L390.94 457.88L391.38 457.7L391.81 457.53L392.24 457.35L392.66 457.17L393.08 456.99L393.49 456.81L393.89 456.63L394.29 456.45L394.68 456.27L395.06 456.08L395.43 455.9L395.8 455.71L396.17 455.53L396.52 455.34L396.87 455.16L397.21 454.97L397.55 454.78L397.88 454.59L398.2 454.4L398.51 454.21L398.82 454.02L399.12 453.82L399.42 453.63L399.7 453.44L399.98 453.24L400.26 453.05L400.52 452.86L400.78 452.66L401.03 452.46L401.28 452.27L401.52 452.07L401.75 451.87L401.97 451.67L402.19 451.48L402.4 451.28L402.6 451.08L402.79 450.88L402.98 450.68L403.16 450.48L403.33 450.27L403.5 450.07L403.66 449.87L403.81 449.67L403.95 449.47L404.09 449.26L404.22 449.06L404.34 448.86L404.46 448.65L404.56 448.45L404.66 448.25L404.76 448.04L404.84 447.84L404.92 447.63L404.99 447.43L405.05 447.22L405.11 447.02L405.16 446.81L405.2 446.61L405.23 446.4L405.26 446.2L405.28 445.99L405.29 445.79L405.29 445.58L405.29 445.38L405.28 445.17L405.26 444.97L405.23 444.76L405.2 444.56L405.16 444.35L405.11 444.14L405.05 443.94L404.99 443.74L404.92 443.53L404.84 443.33L404.76 443.12L404.66 442.92L404.56 442.71L404.46 442.51L404.34 442.31L404.22 442.1L404.09 441.9L403.95 441.7L403.81 441.49L403.66 441.29L403.5 441.09L403.33 440.89L403.16 440.69L402.98 440.49L402.79 440.29L402.6 440.09L402.4 439.89L402.19 439.69L401.97 439.49L401.75 439.29L401.52 439.09L401.28 438.9L401.03 438.7L400.78 438.5L400.52 438.31L400.26 438.11L399.98 437.92L399.7 437.72L399.42 437.53L399.12 437.34L398.82 437.15L398.51 436.96L398.2 436.76L397.88 436.57L397.55 436.39L397.21 436.2L396.87 436.01L396.52 435.82L396.17 435.63L395.8 435.45L395.43 435.26L395.06 435.08L394.68 434.9L394.29 434.71L393.89 434.53L393.49 434.35L393.08 434.17L392.66 433.99L392.24 433.81L391.81 433.64L391.38 433.46L390.94 433.28L390.49 433.11L390.04 432.94L389.58 432.76L389.11 432.59L388.64 432.42L388.16 432.25L387.68 432.08L387.19 431.91L386.69 431.75L386.19 431.58L385.68 431.42L385.16 431.25L384.64 431.09L384.12 430.93L383.59 430.77L383.05 430.61L382.51 430.45L381.96 430.3L381.4 430.14L380.84 429.99L380.27 429.83L379.7 429.68L379.13 429.53L378.54 429.38L377.96 429.23L377.36 429.08L376.77 428.94L376.16 428.79L375.55 428.65L374.94 428.51L374.32 428.37L373.7 428.23L373.07 428.09L372.43 427.95L371.79 427.82L371.15 427.68L370.5 427.55L369.85 427.42L369.19 427.29L368.53 427.16L367.86 427.03L367.19 426.91L366.51 426.78L365.83 426.66L365.14 426.54L364.45 426.42L363.76 426.3L363.06 426.18L362.36 426.07L361.65 425.95L360.94 425.84L360.23 425.73L359.51 425.62L358.79 425.51L358.06 425.41L357.33 425.3L356.6 425.2L355.86 425.1L355.12 425L354.37 424.9L353.62 424.8L352.87 424.7L352.11 424.61L351.36 424.52L350.59 424.43L349.83 424.34L349.06 424.25L348.29 424.16L347.51 424.08L346.73 424L345.95 423.92L345.17 423.84L344.38 423.76L343.59 423.68L342.8 423.61L342.01 423.54L341.21 423.46L340.41 423.39L339.61 423.33L338.8 423.26L338 423.2L337.19 423.13L336.37 423.07L335.56 423.01L334.74 422.96L333.93 422.9L333.11 422.85L332.28 422.79L331.46 422.74L330.64 422.69L329.81 422.65L328.98 422.6L328.15 422.56L327.32 422.52L326.48 422.48L325.65 422.44L324.81 422.4L323.97 422.37L323.14 422.33L322.3 422.3L321.45 422.27L320.61 422.25L319.77 422.22L318.92 422.2L318.08 422.17L317.23 422.15L316.39 422.13L315.54 422.12L314.69 422.1L313.85 422.09L313 422.08L312.15 422.07L311.3 422.06L310.45 422.05L309.6 422.05L308.75 422.05L307.9 422.04L307.05 422.05L306.2 422.05L305.35 422.05L304.5 422.06L303.65 422.07L302.8 422.08L301.95 422.09L301.11 422.1L300.26 422.12L299.41 422.13L298.57 422.15L297.72 422.17L296.88 422.2L296.03 422.22L295.19 422.25L294.35 422.27L293.5 422.3L292.66 422.33L291.83 422.37L290.99 422.4L290.15 422.44L289.32 422.48L288.48 422.52L287.65 422.56L286.82 422.6L285.99 422.65L285.16 422.69L284.34 422.74L283.52 422.79L282.69 422.85L281.87 422.9L281.06 422.96L280.24 423.01L279.43 423.07L278.61 423.13L277.8 423.2L277 423.26L276.19 423.33L275.39 423.39L274.59 423.46L273.79 423.54L273 423.61L272.21 423.68L271.42 423.76L270.63 423.84L269.85 423.92L269.07 424L268.29 424.08L267.51 424.16L266.74 424.25L265.97 424.34L265.21 424.43L264.44 424.52L263.69 424.61L262.93 424.7L262.18 424.8L261.43 424.9L260.68 425L259.94 425.1L259.2 425.2L258.47 425.3L257.74 425.41L257.01 425.51L256.29 425.62L255.57 425.73L254.86 425.84L254.15 425.95L253.44 426.07L252.74 426.18L252.04 426.3L251.35 426.42L250.66 426.54L249.97 426.66L249.29 426.78L248.61 426.91L247.94 427.03L247.27 427.16L246.61 427.29L245.95 427.42L245.3 427.55L244.65 427.68L244.01 427.82L243.37 427.95L242.73 428.09L242.1 428.23L241.48 428.37L240.86 428.51L240.25 428.65L239.64 428.79L239.03 428.94L238.44 429.08L237.84 429.23L237.26 429.38L236.67 429.53L236.1 429.68L235.53 429.83L234.96 429.99L234.4 430.14L233.84 430.3L233.29 430.45L232.75 430.61L232.21 430.77L231.68 430.93L231.16 431.09L230.64 431.25L230.12 431.42L229.61 431.58L229.11 431.75L228.61 431.91L228.12 432.08L227.64 432.25L227.16 432.42L226.69 432.59L226.22 432.76L225.76 432.94L225.31 433.11L224.86 433.28L224.42 433.46L223.99 433.64L223.56 433.81L223.14 433.99L222.72 434.17L222.31 434.35L221.91 434.53L221.51 434.71L221.12 434.9L220.74 435.08L220.37 435.26L220 435.45L219.63 435.63L219.28 435.82L218.93 436.01L218.59 436.2L218.25 436.39L217.92 436.57L217.6 436.76L217.29 436.96L216.98 437.15L216.68 437.34L216.38 437.53L216.1 437.72L215.82 437.92L215.54 438.11L215.28 438.31L215.02 438.5L214.77 438.7L214.52 438.9L214.28 439.09L214.05 439.29L213.83 439.49L213.61 439.69L213.4 439.89L213.2 440.09L213.01 440.29L212.82 440.49L212.64 440.69L212.47 440.89L212.3 441.09L212.14 441.29L211.99 441.49L211.85 441.7L211.71 441.9L211.58 442.1L211.46 442.31L211.34 442.51L211.24 442.71L211.14 442.92L211.04 443.12L210.96 443.33L210.88 443.53L210.81 443.74L210.75 443.94L210.69 444.14L210.64 444.35L210.6 444.56L210.57 444.76L210.54 444.97L210.52 445.17L210.51 445.38L210.51 445.58L210.51 445.79L210.52 445.99L210.54 446.2L210.57 446.4L210.6 446.61L210.64 446.81L210.69 447.02L210.75 447.22L210.81 447.43L210.88 447.63L210.96 447.84L211.04 448.04L211.14 448.25L211.24 448.45L211.34 448.65L211.46 448.86L211.58 449.06L211.71 449.26L211.85 449.47L211.99 449.67L212.14 449.87L212.3 450.07L212.47 450.27L212.64 450.48L212.82 450.68L213.01 450.88L213.2 451.08L213.4 451.28L213.61 451.48L213.83 451.67L214.05 451.87L214.28 452.07L214.52 452.27L214.77 452.46L215.02 452.66L215.28 452.86L215.54 453.05L215.82 453.24L216.1 453.44L216.38 453.63L216.68 453.82L216.98 454.02L217.29 454.21L217.6 454.4L217.92 454.59L218.25 454.78L218.59 454.97L218.93 455.16L219.28 455.34L219.63 455.53L220 455.71L220.37 455.9L220.74 456.08L221.12 456.27L221.51 456.45L221.91 456.63L222.31 456.81L222.72 456.99L223.14 457.17L223.56 457.35L223.99 457.53L224.42 457.7L224.86 457.88L225.31 458.05L225.76 458.23L226.22 458.4L226.69 458.57L227.16 458.74L227.64 458.91L228.12 459.08L228.61 459.25L229.11 459.42L229.61 459.58L230.12 459.75L230.64 459.91L231.16 460.07L231.68 460.23L232.21 460.39L232.75 460.55L233.29 460.71L233.84 460.87L234.4 461.02L234.96 461.18L235.53 461.33L236.1 461.48L236.67 461.63L237.26 461.78L237.84 461.93L238.44 462.08L239.03 462.23" fill="none" stroke="#0000ff" stroke-width="1" shape-rendering="crispEdges"/><path d="M259.2 462.28L259.63 462.38L260.06 462.48L260.5 462.58L260.93 462.68L261.38 462.78L261.82 462.88L262.27 462.97L262.72 463.07L263.18 463.16L263.63 463.26L264.1 463.35L264.56 463.44L265.03 463.53L265.5 463.62L265.98 463.71L266.46 463.8L266.94 463.89L267.42 463.97L267.91 464.06L268.4 464.14L268.89 464.23L269.39 464.31L269.89 464.39L270.39 464.47L270.9 464.55L271.41 464.62L271.92 464.7L272.43 464.78L272.95 464.85L273.47 464.92L273.99 464.99L274.51 465.07L275.04 465.14L275.57 465.2L276.1 465.27L276.64 465.34L277.17 465.4L277.71 465.47L278.25 465.53L278.8 465.59L279.34 465.65L279.89 465.71L280.44 465.77L280.99 465.83L281.55 465.89L282.1 465.94L282.66 465.99L283.22 466.05L283.78 466.1L284.35 466.15L284.91 466.2L285.48 466.25L286.05 466.29L286.62 466.34L287.19 466.38L287.77 466.43L288.34 466.47L288.92 466.51L289.5 466.55L290.08 466.59L290.66 466.62L291.24 466.66L291.82 466.69L292.41 466.73L292.99 466.76L293.58 466.79L294.17 466.82L294.76 466.85L295.35 466.87L295.94 466.9L296.53 466.92L297.13 466.95L297.72 466.97L298.32 466.99L298.91 467.01L299.51 467.03L300.1 467.05L300.7 467.06L301.3 467.08L301.9 467.09L302.5 467.1L303.1 467.11L303.7 467.12L304.3 467.13L304.9 467.14L305.5 467.14L306.1 467.15L306.7 467.15L307.3 467.15L307.9 467.15L308.5 467.15L309.1 467.15L309.7 467.15L310.3 467.14L310.9 467.14L311.5 467.13L312.1 467.12L312.7 467.11L313.3 467.1L313.9 467.09L314.5 467.08L315.1 467.06L315.7 467.05L316.29 467.03L316.89 467.01L317.48 466.99L318.08 466.97L318.67 466.95L319.27 466.92L319.86 466.9L320.45 466.87L321.04 466.85L321.63 466.82L322.22 466.79L322.81 466.76L323.39 466.73L323.98 466.69L324.56 466.66L325.14 466.62L325.72 466.59L326.3 466.55L326.88 466.51L327.46 466.47L328.03 466.43L328.61 466.38L329.18 466.34L329.75 466.29L330.32 466.25L330.89 466.2L331.45 466.15L332.02 466.1L332.58 466.05L333.14 465.99L333.7 465.94L334.25 465.89L334.81 465.83L335.36 465.77L335.91 465.71L336.46 465.65L337 465.59L337.55 465.53L338.09 465.47L338.63 465.4L339.16 465.34L339.7 465.27L340.23 465.2L340.76 465.14L341.29 465.07L341.81 464.99L342.33 464.92L342.85 464.85L343.37 464.78L343.88 464.7L344.39 464.62L344.9 464.55L345.41 464.47L345.91 464.39L346.41 464.31L346.91 464.23L347.4 464.14L347.89 464.06L348.38 463.97L348.86 463.89L349.34 463.8L349.82 463.71L350.3 463.62L350.77 463.53L351.24 463.44L351.7 463.35L352.17 463.26L352.62 463.16L353.08 463.07L353.53 462.97L353.98 462.88L354.42 462.78L354.87 462.68L355.3 462.58L355.74 462.48L356.17 462.38L356.6 462.28L357.02 462.17L357.44 462.07L357.85 461.97L358.26 461.86L358.67 461.75L359.08 461.65L359.48 461.54L359.87 461.43L360.27 461.32L360.65 461.21L361.04 461.1L361.42 460.98L361.79 460.87L362.17 460.76L362.53 460.64L362.9 460.53L363.26 460.41L363.61 460.29L363.96 460.17L364.31 460.06L364.65 459.94L364.99 459.82L365.33 459.7L365.66 459.57L365.98 459.45L366.3 459.33L366.62 459.21L366.93 459.08L367.24 458.96L367.54 458.83L367.84 458.7L368.13 458.58L368.42 458.45L368.7 458.32L368.98 458.19L369.26 458.07L369.53 457.94L369.8 457.81L370.06 457.67L370.31 457.54L370.56 457.41L370.81 457.28L371.05 457.15L371.29 457.01L371.52 456.88L371.75 456.74L371.97 456.61L372.19 456.47L372.4 456.34L372.61 456.2L372.82 456.06L373.01 455.93L373.21 455.79L373.39 455.65L373.58 455.51L373.76 455.38L373.93 455.24L374.1 455.1L374.26 454.96L374.42 454.82L374.57 454.68L374.72 454.54L374.86 454.39L375 454.25L375.13 454.11L375.26 453.97L375.38 453.83L375.5 453.68L375.61 453.54L375.72 453.4L375.82 453.26L375.92 453.11L376.01 452.97L376.09 452.83L376.18 452.68L376.25 452.54L376.32 452.39L376.39 452.25L376.45 452.1L376.5 451.96L376.55 451.81L376.6 451.67L376.64 451.53L376.67 451.38L376.7 451.24L376.72 451.09L376.74 450.94L376.75 450.8L376.76 450.65L376.77 450.51L376.76 450.36L376.75 450.22L376.74 450.07L376.72 449.93L376.7 449.78L376.67 449.64L376.64 449.49L376.6 449.35L376.55 449.2L376.5 449.06L376.45 448.91L376.39 448.77L376.32 448.63L376.25 448.48L376.18 448.34L376.09 448.19L376.01 448.05L375.92 447.91L375.82 447.76L375.72 447.62L375.61 447.48L375.5 447.33L375.38 447.19L375.26 447.05L375.13 446.91L375 446.77L374.86 446.62L374.72 446.48L374.57 446.34L374.42 446.2L374.26 446.06L374.1 445.92L373.93 445.78L373.76 445.64L373.58 445.5L373.39 445.37L373.21 445.23L373.01 445.09L372.82 444.95L372.61 444.82L372.4 444.68L372.19 444.54L371.97 444.41L371.75 444.27L371.52 444.14L371.29 444.01L371.05 443.87L370.81 443.74L370.56 443.61L370.31 443.48L370.06 443.34L369.8 443.21L369.53 443.08L369.26 442.95L368.98 442.82L368.7 442.7L368.42 442.57L368.13 442.44L367.84 442.31L367.54 442.19L367.24 442.06L366.93 441.94L366.62 441.81L366.3 441.69L365.98 441.57L365.66 441.44L365.33 441.32L364.99 441.2L364.65 441.08L364.31 440.96L363.96 440.84L363.61 440.73L363.26 440.61L362.9 440.49L362.53 440.38L362.17 440.26L361.79 440.15L361.42 440.04L361.04 439.92L360.65 439.81L360.27 439.7L359.87 439.59L359.48 439.48L359.08 439.37L358.67 439.26L358.26 439.16L357.85 439.05L357.44 438.95L357.02 438.84L356.6 438.74L356.17 438.64L355.74 438.54L355.3 438.44L354.87 438.34L354.42 438.24L353.98 438.14L353.53 438.04L353.08 437.95L352.62 437.85L352.17 437.76L351.7 437.67L351.24 437.57L350.77 437.48L350.3 437.39L349.82 437.3L349.34 437.22L348.86 437.13L348.38 437.04L347.89 436.96L347.4 436.88L346.91 436.79L346.41 436.71L345.91 436.63L345.41 436.55L344.9 436.47L344.39 436.39L343.88 436.32L343.37 436.24L342.85 436.17L342.33 436.1L341.81 436.02L341.29 435.95L340.76 435.88L340.23 435.81L339.7 435.75L339.16 435.68L338.63 435.61L338.09 435.55L337.55 435.49L337 435.43L336.46 435.36L335.91 435.3L335.36 435.25L334.81 435.19L334.25 435.13L333.7 435.08L333.14 435.02L332.58 434.97L332.02 434.92L331.45 434.87L330.89 434.82L330.32 434.77L329.75 434.73L329.18 434.68L328.61 434.64L328.03 434.59L327.46 434.55L326.88 434.51L326.3 434.47L325.72 434.43L325.14 434.4L324.56 434.36L323.98 434.33L323.39 434.29L322.81 434.26L322.22 434.23L321.63 434.2L321.04 434.17L320.45 434.14L319.86 434.12L319.27 434.09L318.67 434.07L318.08 434.05L317.48 434.03L316.89 434.01L316.29 433.99L315.7 433.97L315.1 433.96L314.5 433.94L313.9 433.93L313.3 433.92L312.7 433.91L312.1 433.9L311.5 433.89L310.9 433.88L310.3 433.88L309.7 433.87L309.1 433.87L308.5 433.87L307.9 433.87L307.3 433.87L306.7 433.87L306.1 433.87L305.5 433.88L304.9 433.88L304.3 433.89L303.7 433.9L303.1 433.91L302.5 433.92L301.9 433.93L301.3 433.94L300.7 433.96L300.1 433.97L299.51 433.99L298.91 434.01L298.32 434.03L297.72 434.05L297.13 434.07L296.53 434.09L295.94 434.12L295.35 434.14L294.76 434.17L294.17 434.2L293.58 434.23L292.99 434.26L292.41 434.29L291.82 434.33L291.24 434.36L290.66 434.4L290.08 434.43L289.5 434.47L288.92 434.51L288.34 434.55L287.77 434.59L287.19 434.64L286.62 434.68L286.05 434.73L285.48 434.77L284.91 434.82L284.35 434.87L283.78 434.92L283.22 434.97L282.66 435.02L282.1 435.08L281.55 435.13L280.99 435.19L280.44 435.25L279.89 435.3L279.34 435.36L278.8 435.43L278.25 435.49L277.71 435.55L277.17 435.61L276.64 435.68L276.1 435.75L275.57 435.81L275.04 435.88L274.51 435.95L273.99 436.02L273.47 436.1L272.95 436.17L272.43 436.24L271.92 436.32L271.41 436.39L270.9 436.47L270.39 436.55L269.89 436.63L269.39 436.71L268.89 436.79L268.4 436.88L267.91 436.96L267.42 437.04L266.94 437.13L266.46 437.22L265.98 437.3L265.5 437.39L265.03 437.48L264.56 437.57L264.1 437.67L263.63 437.76L263.18 437.85L262.72 437.95L262.27 438.04L261.82 438.14L261.38 438.24L260.93 438.34L260.5 438.44L260.06 438.54L259.63 438.64L259.2 438.74L258.78 438.84L258.36 438.95L257.95 439.05L257.54 439.16L257.13 439.26L256.72 439.37L256.32 439.48L255.93 439.59L255.53 439.7L255.15 439.81L254.76 439.92L254.38 440.04L254.01 440.15L253.63 440.26L253.27 440.38L252.9 440.49L252.54 440.61L252.19 440.73L251.84 440.84L251.49 440.96L251.15 441.08L250.81 441.2L250.47 441.32L250.14 441.44L249.82 441.57L249.5 441.69L249.18 441.81L248.87 441.94L248.56 442.06L248.26 442.19L247.96 442.31L247.67 442.44L247.38 442.57L247.1 442.7L246.82 442.82L246.54 442.95L246.27 443.08L246 443.21L245.74 443.34L245.49 443.48L245.24 443.61L244.99 443.74L244.75 443.87L244.51 444.01L244.28 444.14L244.05 444.27L243.83 444.41L243.61 444.54L243.4 444.68L243.19 444.82L242.98 444.95L242.79 445.09L242.59 445.23L242.41 445.37L242.22 445.5L242.04 445.64L241.87 445.78L241.7 445.92L241.54 446.06L241.38 446.2L241.23 446.34L241.08 446.48L240.94 446.62L240.8 446.77L240.67 446.91L240.54 447.05L240.42 447.19L240.3 447.33L240.19 447.48L240.08 447.62L239.98 447.76L239.88 447.91L239.79 448.05L239.71 448.19L239.62 448.34L239.55 448.48L239.48 448.63L239.41 448.77L239.35 448.91L239.3 449.06L239.25 449.2L239.2 449.35L239.16 449.49L239.13 449.64L239.1 449.78L239.08 449.93L239.06 450.07L239.05 450.22L239.04 450.36L239.03 450.51L239.04 450.65L239.05 450.8L239.06 450.94L239.08 451.09L239.1 451.24L239.13 451.38L239.16 451.53L239.2 451.67L239.25 451.81L239.3 451.96L239.35 452.1L239.41 452.25L239.48 452.39L239.55 452.54L239.62 452.68L239.71 452.83L239.79 452.97L239.88 453.11L239.98 453.26L240.08 453.4L240.19 453.54L240.3 453.68L240.42 453.83L240.54 453.97L240.67 454.11L240.8 454.25L240.94 454.39L241.08 454.54L241.23 454.68L241.38 454.82L241.54 454.96L241.7 455.1L241.87 455.24L242.04 455.38L242.22 455.51L242.41 455.65L242.59 455.79L242.79 455.93L242.98 456.06L243.19 456.2L243.4 456.34L243.61 456.47L243.83 456.61L244.05 456.74L244.28 456.88L244.51 457.01L244.75 457.15L244.99 457.28L245.24 457.41L245.49 457.54L245.74 457.67L246 457.81L246.27 457.94L246.54 458.07L246.82 458.19L247.1 458.32L247.38 458.45L247.67 458.58L247.96 458.7L248.26 458.83L248.56 458.96L248.87 459.08L249.18 459.21L249.5 459.33L249.82 459.45L250.14 459.57L250.47 459.7L250.81 459.82L251.15 459.94L251.49 460.06L251.84 460.17L252.19 460.29L252.54 460.41L252.9 460.53L253.27 460.64L253.63 460.76L254.01 460.87L254.38 460.98L254.76 461.1L255.15 461.21L255.53 461.32L255.93 461.43L256.32 461.54L256.72 461.65L257.13 461.75L257.54 461.86L257.95 461.97L258.36 462.07L258.78 462.17L259.2 462.28" fill="none" stroke="#000" stroke-width="1" shape-rendering="crispEdges"/><g font-size="10" fill="#000" opacity="0.85"><text x="243" y="458.5" letter-spacing="-0.5">1.9 1.8 1.6 0.27</text><text x="313" y="458">1.8</text></g><g font-size="10" fill="#000"><text x="115.5" y="412.5">1.6</text><text x="128.5" y="418.5">1.4</text><text x="141.5" y="424.5">1.2</text><text x="481" y="421.5">1</text><text x="493" y="416.3">4</text><text x="503.5" y="413.5">1</text></g><g fill="#00ffff" stroke="#000" stroke-width="1" shape-rendering="crispEdges"><path d="M307.9 471.95L296.48 471.73L307.9 471.51L319.32 471.73Z"/><path d="M330.74 471.41L319.32 471.73L330.74 470.97L342.16 470.64Z"/><path d="M285.06 471.41L273.64 470.64L285.06 470.97L296.48 471.73Z"/><path d="M353.58 469.78L342.16 470.64L353.58 469.34L365 468.48Z"/><path d="M262.22 469.78L250.8 468.48L262.22 469.34L273.64 470.64Z"/><path d="M376.42 467.07L365 468.48L376.42 466.63L387.84 465.22Z"/><path d="M239.38 467.07L227.96 465.22L239.38 466.63L250.8 468.48Z"/><path d="M399.26 463.28L387.84 465.22L399.26 462.84L410.68 460.89Z"/><path d="M216.54 463.28L205.12 460.89L216.54 462.84L227.96 465.22Z"/><path d="M319.32 471.73L307.9 471.51L319.32 470.74L330.74 470.97Z"/><path d="M296.48 471.73L285.06 470.97L296.48 470.74L307.9 471.51Z"/><path d="M342.16 470.64L330.74 470.97L342.16 469.66L353.58 469.34Z"/><path d="M273.64 470.64L262.22 469.34L273.64 469.66L285.06 470.97Z"/><path d="M365 468.48L353.58 469.34L365 467.49L376.42 466.63Z"/><path d="M250.8 468.48L239.38 466.63L250.8 467.49L262.22 469.34Z"/><path d="M387.84 465.22L376.42 466.63L387.84 464.24L399.26 462.84Z"/><path d="M227.96 465.22L216.54 462.84L227.96 464.24L239.38 466.63Z"/><path d="M307.9 471.51L296.48 470.74L307.9 469.98L319.32 470.74Z"/><path d="M330.74 470.97L319.32 470.74L330.74 469.44L342.16 469.66Z"/><path d="M285.06 470.97L273.64 469.66L285.06 469.44L296.48 470.74Z"/><path d="M353.58 469.34L342.16 469.66L353.58 467.81L365 467.49Z"/><path d="M262.22 469.34L250.8 467.49L262.22 467.81L273.64 469.66Z"/><path d="M376.42 466.63L365 467.49L376.42 465.1L387.84 464.24Z"/><path d="M239.38 466.63L227.96 464.24L239.38 465.1L250.8 467.49Z"/><path d="M319.32 470.74L307.9 469.98L319.32 468.68L330.74 469.44Z"/><path d="M296.48 470.74L285.06 469.44L296.48 468.68L307.9 469.98Z"/><path d="M342.16 469.66L330.74 469.44L342.16 467.59L353.58 467.81Z"/><path d="M273.64 469.66L262.22 467.81L273.64 467.59L285.06 469.44Z"/><path d="M365 467.49L353.58 467.81L365 465.42L376.42 465.1Z"/><path d="M250.8 467.49L239.38 465.1L250.8 465.42L262.22 467.81Z"/><path d="M307.9 469.98L296.48 468.68L307.9 467.37L319.32 468.68Z"/><path d="M330.74 469.44L319.32 468.68L330.74 466.83L342.16 467.59Z"/><path d="M285.06 469.44L273.64 467.59L285.06 466.83L296.48 468.68Z"/><path d="M353.58 467.81L342.16 467.59L353.58 465.2L365 465.42Z"/><path d="M262.22 467.81L250.8 465.42L262.22 465.2L273.64 467.59Z"/><path d="M319.32 468.68L307.9 467.37L319.32 465.52L330.74 466.83Z"/><path d="M296.48 468.68L285.06 466.83L296.48 465.52L307.9 467.37Z"/><path d="M342.16 467.59L330.74 466.83L342.16 464.44L353.58 465.2Z"/><path d="M273.64 467.59L262.22 465.2L273.64 464.44L285.06 466.83Z"/><path d="M307.9 467.37L296.48 465.52L307.9 463.68L319.32 465.52Z"/><path d="M330.74 466.83L319.32 465.52L330.74 463.14L342.16 464.44Z"/><path d="M285.06 466.83L273.64 464.44L285.06 463.14L296.48 465.52Z"/><path d="M319.32 465.52L307.9 463.68L319.32 461.29L330.74 463.14Z"/><path d="M296.48 465.52L285.06 463.14L296.48 461.29L307.9 463.68Z"/><path d="M307.9 463.68L296.48 461.29L307.9 458.9L319.32 461.29Z"/></g><path d="M79.5 457.9L79.5 403.7M536.3 457.9L536.3 403.7M79.5 457.9L307.9 513.1M307.9 513.1L536.3 457.9" fill="none" stroke="#000" stroke-width="1" shape-rendering="crispEdges"/><path d="M307.9 458.5V513.1" stroke="#000" stroke-width="1" shape-rendering="crispEdges"/><path d="M73 457.9L79.5 457.9M73 444.35L79.5 444.35M73 430.8L79.5 430.8M73 417.25L79.5 417.25M73 403.7L79.5 403.7" stroke="#000" stroke-width="1" shape-rendering="crispEdges"/><path d="M79.5 457.9l-6.8 1.65M102.34 463.42l-6.8 1.65M125.18 468.94l-6.8 1.65M148.02 474.46l-6.8 1.65M170.86 479.98l-6.8 1.65M193.7 485.5l-6.8 1.65M216.54 491.02l-6.8 1.65M239.38 496.54l-6.8 1.65M262.22 502.06l-6.8 1.65M285.06 507.58l-6.8 1.65M307.9 513.1l-6.8 1.65M307.9 513.1l6.8 1.65M319.32 510.34l1.9 0.6M330.74 507.58l1.9 0.6M342.16 504.82l1.9 0.6M353.58 502.06l1.9 0.6M365 499.3l6.8 1.65M376.42 496.54l1.9 0.6M387.84 493.78l1.9 0.6M399.26 491.02l1.9 0.6M410.68 488.26l1.9 0.6M422.1 485.5l6.8 1.65M433.52 482.74l1.9 0.6M444.94 479.98l1.9 0.6M456.36 477.22l1.9 0.6M467.78 474.46l1.9 0.6M479.2 471.7l6.8 1.65M490.62 468.94l1.9 0.6M502.04 466.18l1.9 0.6M513.46 463.42l1.9 0.6M524.88 460.66l1.9 0.6M536.3 457.9l6.8 1.65" stroke="#000" stroke-width="1" shape-rendering="crispEdges"/><g font-size="10" fill="#000"><text x="70" y="458" text-anchor="end">0</text><text x="70" y="444.45" text-anchor="end">0.5</text><text x="70" y="430.9" text-anchor="end">1</text><text x="70" y="417.35" text-anchor="end">1.5</text><text x="70" y="403.8" text-anchor="end">2</text><text x="65.45" y="465.5" text-anchor="middle">-1</text><text x="84.24" y="472" text-anchor="middle">-0.8</text><text x="107.08" y="477.52" text-anchor="middle">-0.6</text><text x="129.92" y="483.04" text-anchor="middle">-0.4</text><text x="152.76" y="488.56" text-anchor="middle">-0.2</text><text x="181.28" y="492.7" text-anchor="middle">0</text><text x="200.06" y="499.2" text-anchor="middle">0.2</text><text x="222.9" y="504.72" text-anchor="middle">0.4</text><text x="245.74" y="510.24" text-anchor="middle">0.6</text><text x="268.58" y="515.76" text-anchor="middle">0.8</text><text x="295.48" y="520.3" text-anchor="middle">1</text><text x="320.32" y="520.3" text-anchor="middle">1</text><text x="381.48" y="507.48" text-anchor="middle">0.5</text><text x="434.52" y="492.7" text-anchor="middle">0</text><text x="497.3" y="480.28" text-anchor="middle">-0.5</text><text x="550.35" y="465.5" text-anchor="middle">-1</text><text x="45.5" y="428.5" text-anchor="middle">Z</text><text x="156.6" y="497.6" text-anchor="middle">Y</text><text x="460" y="497" text-anchor="middle">X</text></g></svg>
<svg width="615" height="543" style="position:absolute;left:0;top:0" font-family="Liberation Sans, sans-serif"><defs>
<linearGradient id="lb" x1="0" y1="0" x2="1" y2="1"><stop offset="0" stop-color="#dfe9f7"/><stop offset="1" stop-color="#8eaedb"/></linearGradient>
<linearGradient id="hb" x1="0" y1="0" x2="1" y2="1"><stop offset="0" stop-color="#6b90c8"/><stop offset="1" stop-color="#1c4a92"/></linearGradient>
<radialGradient id="zg" cx="0.4" cy="0.35" r="0.7"><stop offset="0" stop-color="#e4eefa"/><stop offset="1" stop-color="#a6c4ea"/></radialGradient>
</defs><path d="M19 53.6h1.9a1.8 1.8 0 0 1 1.8 1.8v0.5h1.3l-2.3 2.5-2.3-2.5h1.3v-0.3a0.3 0.3 0 0 0-0.3-0.3h-1.4Z" fill="#fff" stroke="#98a2b4" stroke-width="0.8" stroke-linejoin="round"/><g transform="rotate(180 16.2 60.4)"><path d="M19 53.6h1.9a1.8 1.8 0 0 1 1.8 1.8v0.5h1.3l-2.3 2.5-2.3-2.5h1.3v-0.3a0.3 0.3 0 0 0-0.3-0.3h-1.4Z" fill="#fff" stroke="#98a2b4" stroke-width="0.8" stroke-linejoin="round"/></g><rect x="8.5" y="52.5" width="10" height="6" fill="url(#lb)" stroke="#1e4f9e" stroke-width="1.2"/><path d="M16 55.4L23.6 62.5L17.9 67.6L10.2 60.4Z" fill="#a9c1e3" stroke="#1e4f9e" stroke-width="1.2" stroke-linejoin="round"/><line x1="55.7" y1="65" x2="57.1" y2="66.4" stroke="#3c3c3c" stroke-width="3.4" stroke-linecap="round"/><line x1="55.7" y1="65" x2="57.1" y2="66.4" stroke="#7a7a7a" stroke-width="1.2" stroke-linecap="round"/><circle cx="49.7" cy="58.9" r="6.3" fill="url(#zg)" stroke="#8a8a8a" stroke-width="1.1"/><line x1="84.9" y1="65" x2="86.30000000000001" y2="66.4" stroke="#3c3c3c" stroke-width="3.4" stroke-linecap="round"/><line x1="84.9" y1="65" x2="86.30000000000001" y2="66.4" stroke="#7a7a7a" stroke-width="1.2" stroke-linecap="round"/><circle cx="78.9" cy="58.9" r="6.3" fill="url(#zg)" stroke="#8a8a8a" stroke-width="1.1"/><g shape-rendering="crispEdges"><rect x="46" y="55" width="8" height="8" fill="#2f5aa4"/><rect x="47" y="56" width="1" height="1" fill="#fff"/><rect x="49" y="56" width="2" height="1" fill="#fff"/><rect x="52" y="56" width="1" height="1" fill="#fff"/><rect x="47" y="58" width="1" height="2" fill="#fff"/><rect x="52" y="58" width="1" height="2" fill="#fff"/><rect x="47" y="61" width="1" height="1" fill="#fff"/><rect x="49" y="61" width="2" height="1" fill="#fff"/><rect x="52" y="61" width="1" height="1" fill="#fff"/><rect x="49" y="58" width="2" height="2" fill="#9cc0ea"/></g><path d="M77.6 56.3h3v6.4h-2.6v-3.9h-1.7v-1.5Z" fill="#fff" stroke="#2c58a3" stroke-width="1.1" stroke-linejoin="miter"/><rect x="33" y="46" width="1" height="30" fill="#808080"/><rect x="34" y="46" width="1" height="30" fill="#fff"/><rect x="97" y="46" width="1" height="30" fill="#808080"/><rect x="98" y="46" width="1" height="30" fill="#fff"/><rect x="198" y="46" width="1" height="30" fill="#808080"/><rect x="199" y="46" width="1" height="30" fill="#fff"/><path d="M115 52.5h11a1 1 0 0 1 1 1v7.5a1 1 0 0 1-1 1h-1.5l-1 1.5-0.5-1.5h-8Z" fill="#f2f2f4" stroke="#2c5aa6" stroke-width="1.1"/><path d="M111 56.5h10a1 1 0 0 1 1 1v6a1 1 0 0 1-1 1h-7.5l-1.7 1.8-0.3-1.8h-0.5a1 1 0 0 1-1-1v-6a1 1 0 0 1 1-1Z" fill="#f4f4f6" stroke="#2c5aa6" stroke-width="1.1"/><g transform="translate(-0.04999999999998295,-0.04999999999999716)">
<defs><linearGradient id="rl149" gradientUnits="userSpaceOnUse" x1="0" y1="57.3" x2="0" y2="66.6">
<stop offset="0" stop-color="#b00000"/><stop offset="0.15" stop-color="#ff2000"/><stop offset="0.33" stop-color="#ffd000"/>
<stop offset="0.5" stop-color="#60e040"/><stop offset="0.66" stop-color="#00d0d0"/><stop offset="0.82" stop-color="#0050ff"/><stop offset="1" stop-color="#00008a"/></linearGradient>
<linearGradient id="rr149" gradientUnits="userSpaceOnUse" x1="0" y1="53.3" x2="0" y2="62.6">
<stop offset="0" stop-color="#b00000"/><stop offset="0.15" stop-color="#ff2000"/><stop offset="0.33" stop-color="#ffd000"/>
<stop offset="0.5" stop-color="#60e040"/><stop offset="0.66" stop-color="#00d0d0"/><stop offset="0.82" stop-color="#0050ff"/><stop offset="1" stop-color="#00008a"/></linearGradient></defs>
<path d="M147.4 56.8Q149.4 52.8 151.4 53.6L156.2 60.4L153 62.8L151.6 62.4Z" fill="url(#rr149)"/>
<path d="M143.5 59.6Q145.6 56.6 147.8 57.6L151.8 62.6L148.8 66.6Z" fill="url(#rl149)"/>
</g><path d="M174 56l8 9M182.5 65l4.5-6" stroke="#707070" stroke-width="1" fill="none"/><rect x="171.8" y="53.6" width="3.6" height="3.6" fill="#d4d0c8" stroke="#707070" stroke-width="1"/><rect x="185.9" y="56.8" width="3.6" height="3.6" fill="#d4d0c8" stroke="#707070" stroke-width="1"/><rect x="180.6" y="63.8" width="3.6" height="3.6" fill="#d4d0c8" stroke="#707070" stroke-width="1"/><defs><radialGradient id="hg" cx="0.35" cy="0.3" r="0.8"><stop offset="0" stop-color="#5a88c8"/><stop offset="1" stop-color="#1f4a8e"/></radialGradient></defs><circle cx="215.9" cy="59.8" r="7.9" fill="#204b92"/><circle cx="215.9" cy="59.8" r="6.5" fill="none" stroke="#fff" stroke-width="1.1"/><circle cx="215.9" cy="59.8" r="5.8" fill="url(#hg)"/><text x="216" y="64.6" font-size="12" font-weight="bold" fill="#fff" text-anchor="middle">?</text><rect x="559" y="5" width="16" height="14" fill="#d4d0c8"/><path d="M559.5 18.5V5.5H574.5" fill="none" stroke="#fff"/><path d="M559.5 18.5H574.5V5.5" fill="none" stroke="#404040"/><path d="M560.5 17.5H573.5V6.5" fill="none" stroke="#808080"/><rect x="575" y="5" width="16" height="14" fill="#d4d0c8"/><path d="M575.5 18.5V5.5H590.5" fill="none" stroke="#fff"/><path d="M575.5 18.5H590.5V5.5" fill="none" stroke="#404040"/><path d="M576.5 17.5H589.5V6.5" fill="none" stroke="#808080"/><rect x="593" y="5" width="16" height="14" fill="#d4d0c8"/><path d="M593.5 18.5V5.5H608.5" fill="none" stroke="#fff"/><path d="M593.5 18.5H608.5V5.5" fill="none" stroke="#404040"/><path d="M594.5 17.5H607.5V6.5" fill="none" stroke="#808080"/><rect x="563" y="14" width="6" height="2" fill="#000"/><rect x="578.5" y="7.5" width="8" height="8" fill="none" stroke="#000"/><rect x="578" y="7" width="9" height="2" fill="#000"/><path d="M597.5 8L604.5 15M604.5 8L597.5 15" stroke="#000" stroke-width="1.6"/><g transform="translate(-139.25,-47.849999999999994)">
<defs><linearGradient id="rl10" gradientUnits="userSpaceOnUse" x1="0" y1="57.3" x2="0" y2="66.6">
<stop offset="0" stop-color="#b00000"/><stop offset="0.15" stop-color="#ff2000"/><stop offset="0.33" stop-color="#ffd000"/>
<stop offset="0.5" stop-color="#60e040"/><stop offset="0.66" stop-color="#00d0d0"/><stop offset="0.82" stop-color="#0050ff"/><stop offset="1" stop-color="#00008a"/></linearGradient>
<linearGradient id="rr10" gradientUnits="userSpaceOnUse" x1="0" y1="53.3" x2="0" y2="62.6">
<stop offset="0" stop-color="#b00000"/><stop offset="0.15" stop-color="#ff2000"/><stop offset="0.33" stop-color="#ffd000"/>
<stop offset="0.5" stop-color="#60e040"/><stop offset="0.66" stop-color="#00d0d0"/><stop offset="0.82" stop-color="#0050ff"/><stop offset="1" stop-color="#00008a"/></linearGradient></defs>
<path d="M147.4 56.8Q149.4 52.8 151.4 53.6L156.2 60.4L153 62.8L151.6 62.4Z" fill="url(#rr10)"/>
<path d="M143.5 59.6Q145.6 56.6 147.8 57.6L151.8 62.6L148.8 66.6Z" fill="url(#rl10)"/>
</g></svg>
</body></html>
